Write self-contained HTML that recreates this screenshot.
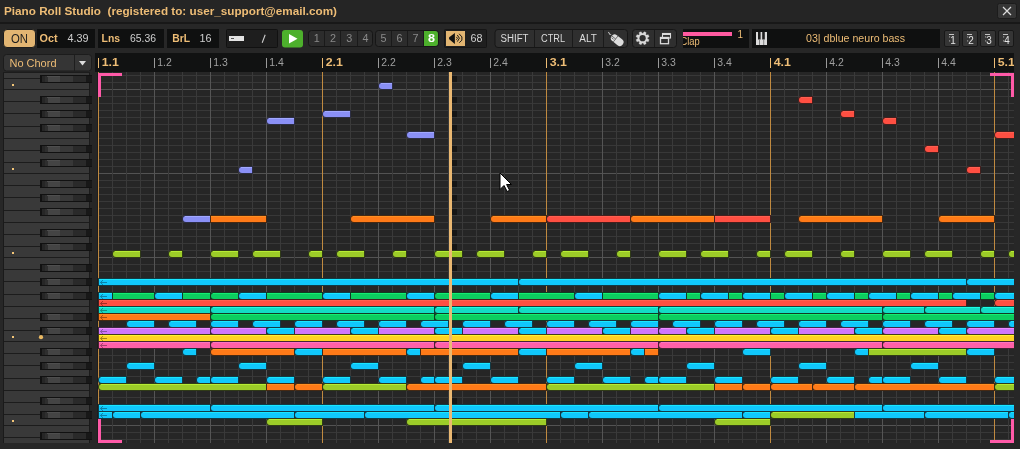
<!DOCTYPE html>
<html><head><meta charset="utf-8"><title>Piano Roll Studio</title>
<style>
html,body{margin:0;padding:0;background:#272727;overflow:hidden;}
svg{display:block;font-family:"Liberation Sans", sans-serif;will-change:transform;}
text{white-space:pre;}
</style></head>
<body>
<svg width="1020" height="449" viewBox="0 0 1020 449">
<rect x="0" y="0" width="1020" height="449" fill="#272727" />
<rect x="0" y="0" width="1020" height="22" fill="#252525" />
<rect x="0" y="22" width="1020" height="2" fill="#181818" />
<text x="4" y="14.6" font-size="10" fill="#eebd76" font-weight="bold" text-anchor="start" textLength="333" lengthAdjust="spacingAndGlyphs" >Piano Roll Studio  (registered to: user_support@email.com)</text>
<rect x="997.5" y="3.5" width="19" height="15" rx="2" fill="#363636" stroke="#1c1c1c" stroke-width="1"/>
<path d="M1003 7 L1011 15 M1011 7 L1003 15" stroke="#dcdcdc" stroke-width="1.2"/>
<rect x="3.5" y="29.5" width="32" height="18" rx="3.5" fill="#e2b572" stroke="#1c1c1c" stroke-width="1"/>
<text x="19.5" y="43" font-size="12" fill="#1e1e1e" font-weight="normal" text-anchor="middle" textLength="17" lengthAdjust="spacingAndGlyphs" >ON</text>
<rect x="37" y="29" width="58" height="19" fill="#0f1010" />
<text x="39.6" y="41.8" font-size="10" fill="#eebd76" font-weight="bold" text-anchor="start" textLength="18" lengthAdjust="spacingAndGlyphs" >Oct</text>
<text x="67.5" y="41.8" font-size="10" fill="#cfcfcf" font-weight="normal" text-anchor="start" textLength="21" lengthAdjust="spacingAndGlyphs" >4.39</text>
<rect x="98" y="29" width="66" height="19" fill="#0f1010" />
<text x="101.6" y="41.8" font-size="10" fill="#eebd76" font-weight="bold" text-anchor="start" textLength="18.5" lengthAdjust="spacingAndGlyphs" >Lns</text>
<text x="130" y="41.8" font-size="10" fill="#cfcfcf" font-weight="normal" text-anchor="start" textLength="26" lengthAdjust="spacingAndGlyphs" >65.36</text>
<rect x="167" y="29" width="52" height="19" fill="#0f1010" />
<text x="172.2" y="41.8" font-size="10" fill="#eebd76" font-weight="bold" text-anchor="start" textLength="17.8" lengthAdjust="spacingAndGlyphs" >BrL</text>
<text x="199.5" y="41.8" font-size="10" fill="#cfcfcf" font-weight="normal" text-anchor="start" textLength="12" lengthAdjust="spacingAndGlyphs" >16</text>
<rect x="226.5" y="29.5" width="51" height="18" rx="1" fill="#1e1e1e" stroke="#111" stroke-width="1"/>
<rect x="229" y="36" width="15" height="5" fill="#e4e4e4" />
<rect x="231" y="38" width="3" height="1" fill="#555" />
<path d="M265.2 34.8 L262.2 42.8" stroke="#d0d0d0" stroke-width="1.1"/>
<rect x="282" y="30" width="21" height="17.5" rx="3" fill="#4db02c"/>
<path d="M289 34 L297.5 38.75 L289 43.5 Z" fill="#ffffff"/>
<rect x="308.5" y="30.5" width="64" height="16" rx="3" fill="#2c2c2c" stroke="#161616" stroke-width="1"/>
<text x="316.625" y="42.3" font-size="10" fill="#8a8a8a" font-weight="normal" text-anchor="middle" textLength="6" lengthAdjust="spacingAndGlyphs" >1</text>
<rect x="324" y="31" width="1" height="15" fill="#1a1a1a" />
<text x="332.875" y="42.3" font-size="10" fill="#8a8a8a" font-weight="normal" text-anchor="middle" textLength="6" lengthAdjust="spacingAndGlyphs" >2</text>
<rect x="340" y="31" width="1" height="15" fill="#1a1a1a" />
<text x="349.125" y="42.3" font-size="10" fill="#8a8a8a" font-weight="normal" text-anchor="middle" textLength="6" lengthAdjust="spacingAndGlyphs" >3</text>
<rect x="357" y="31" width="1" height="15" fill="#1a1a1a" />
<text x="365.375" y="42.3" font-size="10" fill="#8a8a8a" font-weight="normal" text-anchor="middle" textLength="6" lengthAdjust="spacingAndGlyphs" >4</text>
<rect x="375.5" y="30.5" width="63" height="16" rx="3" fill="#2c2c2c" stroke="#161616" stroke-width="1"/>
<text x="383.5" y="42.3" font-size="10" fill="#8a8a8a" font-weight="normal" text-anchor="middle" textLength="6" lengthAdjust="spacingAndGlyphs" >5</text>
<rect x="391" y="31" width="1" height="15" fill="#1a1a1a" />
<text x="399.5" y="42.3" font-size="10" fill="#8a8a8a" font-weight="normal" text-anchor="middle" textLength="6" lengthAdjust="spacingAndGlyphs" >6</text>
<rect x="407" y="31" width="1" height="15" fill="#1a1a1a" />
<text x="415.5" y="42.3" font-size="10" fill="#8a8a8a" font-weight="normal" text-anchor="middle" textLength="6" lengthAdjust="spacingAndGlyphs" >7</text>
<rect x="423" y="31" width="1" height="15" fill="#1a1a1a" />
<path d="M424.0 31 H435 Q438 31 438 34 V43 Q438 46 435 46 H424.0 Z" fill="#4db02c"/>
<text x="431.5" y="42.3" font-size="10.5" fill="#ffffff" font-weight="bold" text-anchor="middle" textLength="7" lengthAdjust="spacingAndGlyphs" >8</text>
<rect x="444.5" y="29.5" width="42" height="18" rx="1" fill="#1f1f1f" stroke="#151515" stroke-width="1"/>
<rect x="446" y="31" width="19" height="15" fill="#e2b572" />
<path d="M449.2 37.2 Q448.8 38.2 449.2 39.2 L454.9 43.9 V32.9 Z" fill="#111"/>
<path d="M456.3 36.9 L457.5 38.3 L456.3 39.7 M457.3 35 L459.4 38.2 L457.3 41.6 M459.1 33.8 L461.9 36.9 V40.2 L459.3 42.7" stroke="#111" stroke-width="0.95" fill="none"/>
<text x="470.5" y="42" font-size="10" fill="#cfcfcf" font-weight="normal" text-anchor="start" textLength="12" lengthAdjust="spacingAndGlyphs" >68</text>
<rect x="495" y="29.5" width="132.5" height="18" rx="3" fill="#2f2f2f" stroke="#161616" stroke-width="1"/>
<rect x="534" y="30" width="1" height="17" fill="#1a1a1a" />
<rect x="572" y="30" width="1" height="17" fill="#1a1a1a" />
<rect x="603" y="30" width="1" height="17" fill="#1a1a1a" />
<text x="514.5" y="42.3" font-size="10" fill="#dcdcdc" font-weight="normal" text-anchor="middle" textLength="28" lengthAdjust="spacingAndGlyphs" >SHIFT</text>
<text x="553" y="42.3" font-size="10" fill="#dcdcdc" font-weight="normal" text-anchor="middle" textLength="24" lengthAdjust="spacingAndGlyphs" >CTRL</text>
<text x="588" y="42.3" font-size="10" fill="#dcdcdc" font-weight="normal" text-anchor="middle" textLength="17.5" lengthAdjust="spacingAndGlyphs" >ALT</text>
<g transform="translate(617.2,40.2) rotate(-52)"><rect x="-3.7" y="-7" width="7.4" height="14" rx="3.7" fill="#dcdcdc"/><path d="M-3.7 -2 H3.7 M0 -7 V-2 M-1.5 -6 V-3.4" stroke="#4a4a4a" stroke-width="0.7"/></g>
<path d="M608 32.2 L609.5 33 L609 34 L611.2 34.6" stroke="#cfcfcf" stroke-width="0.8" fill="none"/>
<rect x="632.5" y="29.5" width="44" height="18" rx="3" fill="#2f2f2f" stroke="#161616" stroke-width="1"/>
<rect x="654" y="30" width="1" height="17" fill="#1a1a1a" />
<path d="M647.48 38.65 L649.13 39.68 L648.27 41.77 L646.37 41.33 L645.73 41.97 L646.17 43.87 L644.08 44.73 L643.05 43.08 L642.15 43.08 L641.12 44.73 L639.03 43.87 L639.47 41.97 L638.83 41.33 L636.93 41.77 L636.07 39.68 L637.72 38.65 L637.72 37.75 L636.07 36.72 L636.93 34.63 L638.83 35.07 L639.47 34.43 L639.03 32.53 L641.12 31.67 L642.15 33.32 L643.05 33.32 L644.08 31.67 L646.17 32.53 L645.73 34.43 L646.37 35.07 L648.27 34.63 L649.13 36.72 L647.48 37.75 Z" fill="#d8d8d8" stroke="#d8d8d8" stroke-width="0.3" stroke-linejoin="round"/><circle cx="642.6" cy="38.2" r="3.1" fill="#2f2f2f"/>
<rect x="662.5" y="33.5" width="8" height="4.5" fill="none" stroke="#dadada" stroke-width="1.1"/>
<rect x="662" y="33" width="9" height="2" fill="#dadada" />
<rect x="660.5" y="37.5" width="8" height="6.2" fill="#2f2f2f" stroke="#dadada" stroke-width="1.3"/>
<rect x="660" y="37" width="9" height="2" fill="#dadada" />
<rect x="683" y="29" width="66" height="19" fill="#0f1010" />
<rect x="683" y="32" width="49" height="4" fill="#ff5aa0" />
<text x="737.5" y="37.8" font-size="10" fill="#eebd76" font-weight="normal" text-anchor="start" textLength="5.5" lengthAdjust="spacingAndGlyphs" >1</text>
<clipPath id="clapclip"><rect x="683" y="29" width="66" height="19"/></clipPath>
<text x="680.4" y="45.2" font-size="10" fill="#eebd76" font-weight="normal" text-anchor="start" textLength="19.2" lengthAdjust="spacingAndGlyphs" clip-path="url(#clapclip)">Clap</text>
<rect x="752" y="29" width="188" height="19" fill="#0f1010" />
<rect x="756" y="32" width="11" height="13" fill="#dcdcdc" />
<rect x="758" y="32" width="2.6" height="7.5" fill="#1e1e1e" />
<rect x="762.2" y="32" width="2.6" height="7.5" fill="#1e1e1e" />
<rect x="759" y="39.5" width="0.9" height="5.5" fill="#777" />
<rect x="763.3" y="39.5" width="0.9" height="5.5" fill="#777" />
<text x="855.5" y="42.3" font-size="10" fill="#eebd76" font-weight="normal" text-anchor="middle" textLength="99" lengthAdjust="spacingAndGlyphs" >03| dblue neuro bass</text>
<rect x="944.5" y="30.5" width="15.0" height="16" rx="1.5" fill="#353535" stroke="#181818" stroke-width="1"/>
<rect x="949.0" y="34" width="5" height="1" fill="#c4c4c4" />
<text x="953.0" y="44" font-size="10" fill="#e6e6e6" font-weight="normal" text-anchor="middle" textLength="5.5" lengthAdjust="spacingAndGlyphs" >1</text>
<rect x="949.0" y="36.3" width="1.2" height="1.2" fill="#9a9a9a" />
<rect x="949.0" y="40.3" width="1.2" height="1.2" fill="#9a9a9a" />
<rect x="962.5" y="30.5" width="15.0" height="16" rx="1.5" fill="#353535" stroke="#181818" stroke-width="1"/>
<rect x="967.0" y="34" width="5" height="1" fill="#c4c4c4" />
<text x="971.0" y="44" font-size="10" fill="#e6e6e6" font-weight="normal" text-anchor="middle" textLength="5.5" lengthAdjust="spacingAndGlyphs" >2</text>
<rect x="967.0" y="36.3" width="1.2" height="1.2" fill="#9a9a9a" />
<rect x="967.0" y="40.3" width="1.2" height="1.2" fill="#9a9a9a" />
<rect x="980.5" y="30.5" width="15.0" height="16" rx="1.5" fill="#353535" stroke="#181818" stroke-width="1"/>
<rect x="985.0" y="34" width="5" height="1" fill="#c4c4c4" />
<text x="989.0" y="44" font-size="10" fill="#e6e6e6" font-weight="normal" text-anchor="middle" textLength="5.5" lengthAdjust="spacingAndGlyphs" >3</text>
<rect x="985.0" y="36.3" width="1.2" height="1.2" fill="#9a9a9a" />
<rect x="985.0" y="40.3" width="1.2" height="1.2" fill="#9a9a9a" />
<rect x="998.5" y="30.5" width="15.0" height="16" rx="1.5" fill="#353535" stroke="#181818" stroke-width="1"/>
<rect x="1003.0" y="34" width="5" height="1" fill="#c4c4c4" />
<text x="1007.0" y="44" font-size="10" fill="#e6e6e6" font-weight="normal" text-anchor="middle" textLength="5.5" lengthAdjust="spacingAndGlyphs" >4</text>
<rect x="1003.0" y="36.3" width="1.2" height="1.2" fill="#9a9a9a" />
<rect x="1003.0" y="40.3" width="1.2" height="1.2" fill="#9a9a9a" />
<rect x="3.5" y="54.5" width="88" height="16.5" rx="3" fill="#353535" stroke="#1c1c1c" stroke-width="1"/>
<rect x="74" y="55" width="1" height="16" fill="#1e1e1e" />
<text x="9.5" y="66.8" font-size="10" fill="#eebd76" font-weight="normal" text-anchor="start" textLength="47" lengthAdjust="spacingAndGlyphs" >No Chord</text>
<path d="M79 61 H86 L82.5 65.5 Z" fill="#dedede"/>
<rect x="95" y="53" width="919" height="19" fill="#111212" />
<rect x="98" y="58" width="1" height="10" fill="#eebd76" />
<text x="101.7" y="66.3" font-size="10" fill="#eebd76" font-weight="bold" text-anchor="start" textLength="17.2" lengthAdjust="spacingAndGlyphs" clip-path="url(#rulerclip)">1.1</text>
<rect x="154" y="58" width="1" height="10" fill="#9a9a9a" />
<text x="157.3" y="66.3" font-size="10" fill="#a0a0a0" font-weight="normal" text-anchor="start" textLength="14.5" lengthAdjust="spacingAndGlyphs" >1.2</text>
<rect x="210" y="58" width="1" height="10" fill="#9a9a9a" />
<text x="213.3" y="66.3" font-size="10" fill="#a0a0a0" font-weight="normal" text-anchor="start" textLength="14.5" lengthAdjust="spacingAndGlyphs" >1.3</text>
<rect x="266" y="58" width="1" height="10" fill="#9a9a9a" />
<text x="269.3" y="66.3" font-size="10" fill="#a0a0a0" font-weight="normal" text-anchor="start" textLength="14.5" lengthAdjust="spacingAndGlyphs" >1.4</text>
<rect x="322" y="58" width="1" height="10" fill="#eebd76" />
<text x="325.7" y="66.3" font-size="10" fill="#eebd76" font-weight="bold" text-anchor="start" textLength="17.2" lengthAdjust="spacingAndGlyphs" clip-path="url(#rulerclip)">2.1</text>
<rect x="378" y="58" width="1" height="10" fill="#9a9a9a" />
<text x="381.3" y="66.3" font-size="10" fill="#a0a0a0" font-weight="normal" text-anchor="start" textLength="14.5" lengthAdjust="spacingAndGlyphs" >2.2</text>
<rect x="434" y="58" width="1" height="10" fill="#9a9a9a" />
<text x="437.3" y="66.3" font-size="10" fill="#a0a0a0" font-weight="normal" text-anchor="start" textLength="14.5" lengthAdjust="spacingAndGlyphs" >2.3</text>
<rect x="490" y="58" width="1" height="10" fill="#9a9a9a" />
<text x="493.3" y="66.3" font-size="10" fill="#a0a0a0" font-weight="normal" text-anchor="start" textLength="14.5" lengthAdjust="spacingAndGlyphs" >2.4</text>
<rect x="546" y="58" width="1" height="10" fill="#eebd76" />
<text x="549.7" y="66.3" font-size="10" fill="#eebd76" font-weight="bold" text-anchor="start" textLength="17.2" lengthAdjust="spacingAndGlyphs" clip-path="url(#rulerclip)">3.1</text>
<rect x="602" y="58" width="1" height="10" fill="#9a9a9a" />
<text x="605.3" y="66.3" font-size="10" fill="#a0a0a0" font-weight="normal" text-anchor="start" textLength="14.5" lengthAdjust="spacingAndGlyphs" >3.2</text>
<rect x="658" y="58" width="1" height="10" fill="#9a9a9a" />
<text x="661.3" y="66.3" font-size="10" fill="#a0a0a0" font-weight="normal" text-anchor="start" textLength="14.5" lengthAdjust="spacingAndGlyphs" >3.3</text>
<rect x="714" y="58" width="1" height="10" fill="#9a9a9a" />
<text x="717.3" y="66.3" font-size="10" fill="#a0a0a0" font-weight="normal" text-anchor="start" textLength="14.5" lengthAdjust="spacingAndGlyphs" >3.4</text>
<rect x="770" y="58" width="1" height="10" fill="#eebd76" />
<text x="773.7" y="66.3" font-size="10" fill="#eebd76" font-weight="bold" text-anchor="start" textLength="17.2" lengthAdjust="spacingAndGlyphs" clip-path="url(#rulerclip)">4.1</text>
<rect x="826" y="58" width="1" height="10" fill="#9a9a9a" />
<text x="829.3" y="66.3" font-size="10" fill="#a0a0a0" font-weight="normal" text-anchor="start" textLength="14.5" lengthAdjust="spacingAndGlyphs" >4.2</text>
<rect x="882" y="58" width="1" height="10" fill="#9a9a9a" />
<text x="885.3" y="66.3" font-size="10" fill="#a0a0a0" font-weight="normal" text-anchor="start" textLength="14.5" lengthAdjust="spacingAndGlyphs" >4.3</text>
<rect x="938" y="58" width="1" height="10" fill="#9a9a9a" />
<text x="941.3" y="66.3" font-size="10" fill="#a0a0a0" font-weight="normal" text-anchor="start" textLength="14.5" lengthAdjust="spacingAndGlyphs" >4.4</text>
<rect x="994" y="58" width="1" height="10" fill="#eebd76" />
<text x="997.7" y="66.3" font-size="10" fill="#eebd76" font-weight="bold" text-anchor="start" textLength="17.2" lengthAdjust="spacingAndGlyphs" clip-path="url(#rulerclip)">5.1</text>
<clipPath id="rulerclip"><rect x="95" y="53" width="919" height="19"/></clipPath>
<rect x="3" y="72" width="1" height="371" fill="#1a1a1a" />
<rect x="4" y="72" width="85" height="371" fill="#393939" />
<rect x="89" y="72" width="1" height="371" fill="#1a1a1a" />
<rect x="3" y="72" width="86" height="1" fill="#1c1c1c" />
<rect x="90" y="72" width="7" height="371" fill="#262626" />
<rect x="97" y="72" width="1" height="371" fill="#1e1e1e" />
<rect x="4" y="89" width="85" height="1" fill="#1c1c1c" />
<rect x="4" y="78" width="85" height="1" fill="#1c1c1c" />
<rect x="12" y="84" width="2" height="2" fill="#f4c678" />
<rect x="4" y="173" width="85" height="1" fill="#1c1c1c" />
<rect x="4" y="162" width="85" height="1" fill="#1c1c1c" />
<rect x="4" y="150" width="85" height="1" fill="#1c1c1c" />
<rect x="4" y="138" width="85" height="1" fill="#1c1c1c" />
<rect x="4" y="126" width="85" height="1" fill="#1c1c1c" />
<rect x="4" y="113" width="85" height="1" fill="#1c1c1c" />
<rect x="4" y="101" width="85" height="1" fill="#1c1c1c" />
<rect x="12" y="168" width="2" height="2" fill="#f4c678" />
<rect x="4" y="257" width="85" height="1" fill="#1c1c1c" />
<rect x="4" y="246" width="85" height="1" fill="#1c1c1c" />
<rect x="4" y="234" width="85" height="1" fill="#1c1c1c" />
<rect x="4" y="222" width="85" height="1" fill="#1c1c1c" />
<rect x="4" y="210" width="85" height="1" fill="#1c1c1c" />
<rect x="4" y="197" width="85" height="1" fill="#1c1c1c" />
<rect x="4" y="185" width="85" height="1" fill="#1c1c1c" />
<rect x="12" y="252" width="2" height="2" fill="#f4c678" />
<rect x="4" y="341" width="85" height="1" fill="#1c1c1c" />
<rect x="4" y="330" width="85" height="1" fill="#1c1c1c" />
<rect x="4" y="318" width="85" height="1" fill="#1c1c1c" />
<rect x="4" y="306" width="85" height="1" fill="#1c1c1c" />
<rect x="4" y="294" width="85" height="1" fill="#1c1c1c" />
<rect x="4" y="281" width="85" height="1" fill="#1c1c1c" />
<rect x="4" y="269" width="85" height="1" fill="#1c1c1c" />
<rect x="12" y="336" width="2" height="2" fill="#f4c678" />
<rect x="4" y="425" width="85" height="1" fill="#1c1c1c" />
<rect x="4" y="414" width="85" height="1" fill="#1c1c1c" />
<rect x="4" y="402" width="85" height="1" fill="#1c1c1c" />
<rect x="4" y="390" width="85" height="1" fill="#1c1c1c" />
<rect x="4" y="378" width="85" height="1" fill="#1c1c1c" />
<rect x="4" y="365" width="85" height="1" fill="#1c1c1c" />
<rect x="4" y="353" width="85" height="1" fill="#1c1c1c" />
<rect x="12" y="420" width="2" height="2" fill="#f4c678" />
<rect x="4" y="437" width="85" height="1" fill="#1c1c1c" />
<linearGradient id="bk" x1="0" x2="1" y1="0" y2="0"><stop offset="0" stop-color="#111"/><stop offset="0.03" stop-color="#111"/><stop offset="0.03" stop-color="#262626"/><stop offset="0.092" stop-color="#262626"/><stop offset="0.092" stop-color="#2e2e2e"/><stop offset="0.15" stop-color="#2e2e2e"/><stop offset="0.15" stop-color="#444"/><stop offset="0.387" stop-color="#444"/><stop offset="0.387" stop-color="#383838"/><stop offset="0.635" stop-color="#383838"/><stop offset="0.635" stop-color="#2a2a2a"/><stop offset="0.885" stop-color="#2a2a2a"/><stop offset="0.885" stop-color="#181818"/><stop offset="1" stop-color="#181818"/></linearGradient>
<clipPath id="pianoclip"><rect x="0" y="72" width="95" height="371"/></clipPath>
<g clip-path="url(#pianoclip)">
<rect x="40" y="75" width="52" height="8" fill="#111111" />
<rect x="40" y="76" width="52" height="6" fill="url(#bk)" />
<rect x="47" y="76" width="13" height="1" fill="#4e4e4e" />
<rect x="40" y="96" width="52" height="8" fill="#111111" />
<rect x="40" y="97" width="52" height="6" fill="url(#bk)" />
<rect x="47" y="97" width="13" height="1" fill="#4e4e4e" />
<rect x="40" y="110" width="52" height="8" fill="#111111" />
<rect x="40" y="111" width="52" height="6" fill="url(#bk)" />
<rect x="47" y="111" width="13" height="1" fill="#4e4e4e" />
<rect x="40" y="124" width="52" height="8" fill="#111111" />
<rect x="40" y="125" width="52" height="6" fill="url(#bk)" />
<rect x="47" y="125" width="13" height="1" fill="#4e4e4e" />
<rect x="40" y="145" width="52" height="8" fill="#111111" />
<rect x="40" y="146" width="52" height="6" fill="url(#bk)" />
<rect x="47" y="146" width="13" height="1" fill="#4e4e4e" />
<rect x="40" y="159" width="52" height="8" fill="#111111" />
<rect x="40" y="160" width="52" height="6" fill="url(#bk)" />
<rect x="47" y="160" width="13" height="1" fill="#4e4e4e" />
<rect x="40" y="180" width="52" height="8" fill="#111111" />
<rect x="40" y="181" width="52" height="6" fill="url(#bk)" />
<rect x="47" y="181" width="13" height="1" fill="#4e4e4e" />
<rect x="40" y="194" width="52" height="8" fill="#111111" />
<rect x="40" y="195" width="52" height="6" fill="url(#bk)" />
<rect x="47" y="195" width="13" height="1" fill="#4e4e4e" />
<rect x="40" y="208" width="52" height="8" fill="#111111" />
<rect x="40" y="209" width="52" height="6" fill="url(#bk)" />
<rect x="47" y="209" width="13" height="1" fill="#4e4e4e" />
<rect x="40" y="229" width="52" height="8" fill="#111111" />
<rect x="40" y="230" width="52" height="6" fill="url(#bk)" />
<rect x="47" y="230" width="13" height="1" fill="#4e4e4e" />
<rect x="40" y="243" width="52" height="8" fill="#111111" />
<rect x="40" y="244" width="52" height="6" fill="url(#bk)" />
<rect x="47" y="244" width="13" height="1" fill="#4e4e4e" />
<rect x="40" y="264" width="52" height="8" fill="#111111" />
<rect x="40" y="265" width="52" height="6" fill="url(#bk)" />
<rect x="47" y="265" width="13" height="1" fill="#4e4e4e" />
<rect x="40" y="278" width="52" height="8" fill="#111111" />
<rect x="40" y="279" width="52" height="6" fill="url(#bk)" />
<rect x="47" y="279" width="13" height="1" fill="#4e4e4e" />
<rect x="40" y="292" width="52" height="8" fill="#111111" />
<rect x="40" y="293" width="52" height="6" fill="url(#bk)" />
<rect x="47" y="293" width="13" height="1" fill="#4e4e4e" />
<rect x="40" y="313" width="52" height="8" fill="#111111" />
<rect x="40" y="314" width="52" height="6" fill="url(#bk)" />
<rect x="47" y="314" width="13" height="1" fill="#4e4e4e" />
<rect x="40" y="327" width="52" height="8" fill="#111111" />
<rect x="40" y="328" width="52" height="6" fill="url(#bk)" />
<rect x="47" y="328" width="13" height="1" fill="#4e4e4e" />
<rect x="40" y="348" width="52" height="8" fill="#111111" />
<rect x="40" y="349" width="52" height="6" fill="url(#bk)" />
<rect x="47" y="349" width="13" height="1" fill="#4e4e4e" />
<rect x="40" y="362" width="52" height="8" fill="#111111" />
<rect x="40" y="363" width="52" height="6" fill="url(#bk)" />
<rect x="47" y="363" width="13" height="1" fill="#4e4e4e" />
<rect x="40" y="376" width="52" height="8" fill="#111111" />
<rect x="40" y="377" width="52" height="6" fill="url(#bk)" />
<rect x="47" y="377" width="13" height="1" fill="#4e4e4e" />
<rect x="40" y="397" width="52" height="8" fill="#111111" />
<rect x="40" y="398" width="52" height="6" fill="url(#bk)" />
<rect x="47" y="398" width="13" height="1" fill="#4e4e4e" />
<rect x="40" y="411" width="52" height="8" fill="#111111" />
<rect x="40" y="412" width="52" height="6" fill="url(#bk)" />
<rect x="47" y="412" width="13" height="1" fill="#4e4e4e" />
<rect x="40" y="432" width="52" height="8" fill="#111111" />
<rect x="40" y="433" width="52" height="6" fill="url(#bk)" />
<rect x="47" y="433" width="13" height="1" fill="#4e4e4e" />
<rect x="40" y="446" width="52" height="8" fill="#111111" />
<rect x="40" y="447" width="52" height="6" fill="url(#bk)" />
<rect x="47" y="447" width="13" height="1" fill="#4e4e4e" />
</g>
<circle cx="41" cy="337.2" r="2.1" fill="#eab962"/>
<rect x="98" y="72" width="916" height="371" fill="#262626" />
<rect x="98" y="75" width="916" height="1" fill="#383838" />
<rect x="98" y="82" width="916" height="1" fill="#383838" />
<rect x="98" y="89" width="916" height="1" fill="#535353" />
<rect x="98" y="96" width="916" height="1" fill="#383838" />
<rect x="98" y="103" width="916" height="1" fill="#383838" />
<rect x="98" y="110" width="916" height="1" fill="#383838" />
<rect x="98" y="117" width="916" height="1" fill="#383838" />
<rect x="98" y="124" width="916" height="1" fill="#383838" />
<rect x="98" y="131" width="916" height="1" fill="#383838" />
<rect x="98" y="138" width="916" height="1" fill="#383838" />
<rect x="98" y="145" width="916" height="1" fill="#383838" />
<rect x="98" y="152" width="916" height="1" fill="#383838" />
<rect x="98" y="159" width="916" height="1" fill="#383838" />
<rect x="98" y="166" width="916" height="1" fill="#383838" />
<rect x="98" y="173" width="916" height="1" fill="#535353" />
<rect x="98" y="180" width="916" height="1" fill="#383838" />
<rect x="98" y="187" width="916" height="1" fill="#383838" />
<rect x="98" y="194" width="916" height="1" fill="#383838" />
<rect x="98" y="201" width="916" height="1" fill="#383838" />
<rect x="98" y="208" width="916" height="1" fill="#383838" />
<rect x="98" y="215" width="916" height="1" fill="#383838" />
<rect x="98" y="222" width="916" height="1" fill="#383838" />
<rect x="98" y="229" width="916" height="1" fill="#383838" />
<rect x="98" y="236" width="916" height="1" fill="#383838" />
<rect x="98" y="243" width="916" height="1" fill="#383838" />
<rect x="98" y="250" width="916" height="1" fill="#383838" />
<rect x="98" y="257" width="916" height="1" fill="#535353" />
<rect x="98" y="264" width="916" height="1" fill="#383838" />
<rect x="98" y="271" width="916" height="1" fill="#383838" />
<rect x="98" y="278" width="916" height="1" fill="#383838" />
<rect x="98" y="285" width="916" height="1" fill="#383838" />
<rect x="98" y="292" width="916" height="1" fill="#383838" />
<rect x="98" y="299" width="916" height="1" fill="#383838" />
<rect x="98" y="306" width="916" height="1" fill="#383838" />
<rect x="98" y="313" width="916" height="1" fill="#383838" />
<rect x="98" y="320" width="916" height="1" fill="#383838" />
<rect x="98" y="327" width="916" height="1" fill="#383838" />
<rect x="98" y="334" width="916" height="1" fill="#383838" />
<rect x="98" y="341" width="916" height="1" fill="#535353" />
<rect x="98" y="348" width="916" height="1" fill="#383838" />
<rect x="98" y="355" width="916" height="1" fill="#383838" />
<rect x="98" y="362" width="916" height="1" fill="#383838" />
<rect x="98" y="369" width="916" height="1" fill="#383838" />
<rect x="98" y="376" width="916" height="1" fill="#383838" />
<rect x="98" y="383" width="916" height="1" fill="#383838" />
<rect x="98" y="390" width="916" height="1" fill="#383838" />
<rect x="98" y="397" width="916" height="1" fill="#383838" />
<rect x="98" y="404" width="916" height="1" fill="#383838" />
<rect x="98" y="411" width="916" height="1" fill="#383838" />
<rect x="98" y="418" width="916" height="1" fill="#383838" />
<rect x="98" y="425" width="916" height="1" fill="#535353" />
<rect x="98" y="432" width="916" height="1" fill="#383838" />
<rect x="98" y="439" width="916" height="1" fill="#383838" />
<rect x="98" y="72" width="1" height="371" fill="#c08a40" />
<rect x="112" y="72" width="1" height="371" fill="#3a3a3a" />
<rect x="126" y="72" width="1" height="371" fill="#3a3a3a" />
<rect x="140" y="72" width="1" height="371" fill="#3a3a3a" />
<rect x="154" y="72" width="1" height="371" fill="#555555" />
<rect x="168" y="72" width="1" height="371" fill="#3a3a3a" />
<rect x="182" y="72" width="1" height="371" fill="#3a3a3a" />
<rect x="196" y="72" width="1" height="371" fill="#3a3a3a" />
<rect x="210" y="72" width="1" height="371" fill="#555555" />
<rect x="224" y="72" width="1" height="371" fill="#3a3a3a" />
<rect x="238" y="72" width="1" height="371" fill="#3a3a3a" />
<rect x="252" y="72" width="1" height="371" fill="#3a3a3a" />
<rect x="266" y="72" width="1" height="371" fill="#555555" />
<rect x="280" y="72" width="1" height="371" fill="#3a3a3a" />
<rect x="294" y="72" width="1" height="371" fill="#3a3a3a" />
<rect x="308" y="72" width="1" height="371" fill="#3a3a3a" />
<rect x="322" y="72" width="1" height="371" fill="#c08a40" />
<rect x="336" y="72" width="1" height="371" fill="#3a3a3a" />
<rect x="350" y="72" width="1" height="371" fill="#3a3a3a" />
<rect x="364" y="72" width="1" height="371" fill="#3a3a3a" />
<rect x="378" y="72" width="1" height="371" fill="#555555" />
<rect x="392" y="72" width="1" height="371" fill="#3a3a3a" />
<rect x="406" y="72" width="1" height="371" fill="#3a3a3a" />
<rect x="420" y="72" width="1" height="371" fill="#3a3a3a" />
<rect x="434" y="72" width="1" height="371" fill="#555555" />
<rect x="448" y="72" width="1" height="371" fill="#3a3a3a" />
<rect x="462" y="72" width="1" height="371" fill="#3a3a3a" />
<rect x="476" y="72" width="1" height="371" fill="#3a3a3a" />
<rect x="490" y="72" width="1" height="371" fill="#555555" />
<rect x="504" y="72" width="1" height="371" fill="#3a3a3a" />
<rect x="518" y="72" width="1" height="371" fill="#3a3a3a" />
<rect x="532" y="72" width="1" height="371" fill="#3a3a3a" />
<rect x="546" y="72" width="1" height="371" fill="#c08a40" />
<rect x="560" y="72" width="1" height="371" fill="#3a3a3a" />
<rect x="574" y="72" width="1" height="371" fill="#3a3a3a" />
<rect x="588" y="72" width="1" height="371" fill="#3a3a3a" />
<rect x="602" y="72" width="1" height="371" fill="#555555" />
<rect x="616" y="72" width="1" height="371" fill="#3a3a3a" />
<rect x="630" y="72" width="1" height="371" fill="#3a3a3a" />
<rect x="644" y="72" width="1" height="371" fill="#3a3a3a" />
<rect x="658" y="72" width="1" height="371" fill="#555555" />
<rect x="672" y="72" width="1" height="371" fill="#3a3a3a" />
<rect x="686" y="72" width="1" height="371" fill="#3a3a3a" />
<rect x="700" y="72" width="1" height="371" fill="#3a3a3a" />
<rect x="714" y="72" width="1" height="371" fill="#555555" />
<rect x="728" y="72" width="1" height="371" fill="#3a3a3a" />
<rect x="742" y="72" width="1" height="371" fill="#3a3a3a" />
<rect x="756" y="72" width="1" height="371" fill="#3a3a3a" />
<rect x="770" y="72" width="1" height="371" fill="#c08a40" />
<rect x="784" y="72" width="1" height="371" fill="#3a3a3a" />
<rect x="798" y="72" width="1" height="371" fill="#3a3a3a" />
<rect x="812" y="72" width="1" height="371" fill="#3a3a3a" />
<rect x="826" y="72" width="1" height="371" fill="#555555" />
<rect x="840" y="72" width="1" height="371" fill="#3a3a3a" />
<rect x="854" y="72" width="1" height="371" fill="#3a3a3a" />
<rect x="868" y="72" width="1" height="371" fill="#3a3a3a" />
<rect x="882" y="72" width="1" height="371" fill="#555555" />
<rect x="896" y="72" width="1" height="371" fill="#3a3a3a" />
<rect x="910" y="72" width="1" height="371" fill="#3a3a3a" />
<rect x="924" y="72" width="1" height="371" fill="#3a3a3a" />
<rect x="938" y="72" width="1" height="371" fill="#555555" />
<rect x="952" y="72" width="1" height="371" fill="#3a3a3a" />
<rect x="966" y="72" width="1" height="371" fill="#3a3a3a" />
<rect x="980" y="72" width="1" height="371" fill="#3a3a3a" />
<rect x="994" y="72" width="1" height="371" fill="#c08a40" />
<rect x="1008" y="72" width="1" height="371" fill="#3a3a3a" />
<rect x="452" y="76" width="5" height="6" fill="#151515" />
<rect x="452" y="97" width="5" height="6" fill="#151515" />
<rect x="452" y="111" width="5" height="6" fill="#151515" />
<rect x="452" y="125" width="5" height="6" fill="#151515" />
<rect x="452" y="146" width="5" height="6" fill="#151515" />
<rect x="452" y="160" width="5" height="6" fill="#151515" />
<rect x="452" y="181" width="5" height="6" fill="#151515" />
<rect x="452" y="195" width="5" height="6" fill="#151515" />
<rect x="452" y="209" width="5" height="6" fill="#151515" />
<rect x="452" y="230" width="5" height="6" fill="#151515" />
<rect x="452" y="244" width="5" height="6" fill="#151515" />
<rect x="452" y="265" width="5" height="6" fill="#151515" />
<rect x="452" y="279" width="5" height="6" fill="#151515" />
<rect x="452" y="293" width="5" height="6" fill="#151515" />
<rect x="452" y="314" width="5" height="6" fill="#151515" />
<rect x="452" y="328" width="5" height="6" fill="#151515" />
<rect x="452" y="349" width="5" height="6" fill="#151515" />
<rect x="452" y="363" width="5" height="6" fill="#151515" />
<rect x="452" y="377" width="5" height="6" fill="#151515" />
<rect x="452" y="398" width="5" height="6" fill="#151515" />
<rect x="452" y="412" width="5" height="6" fill="#151515" />
<rect x="452" y="433" width="5" height="6" fill="#151515" />
<clipPath id="gridclip"><rect x="98" y="72" width="916" height="371"/></clipPath>
<g clip-path="url(#gridclip)">
<path d="M382 82 H393 V90 H382 A4 4 0 0 1 378 86 V86 A4 4 0 0 1 382 82 Z" fill="#2c2e44"/>
<path d="M382 83 H392 V89 H382 A3 3 0 0 1 379 86 V86 A3 3 0 0 1 382 83 Z" fill="#8a90f6"/>
<rect x="381" y="83" width="11" height="1" fill="#a1a8ff" />
<path d="M802 96 H813 V104 H802 A4 4 0 0 1 798 100 V100 A4 4 0 0 1 802 96 Z" fill="#461f1d"/>
<path d="M802 97 H812 V103 H802 A3 3 0 0 1 799 100 V100 A3 3 0 0 1 802 97 Z" fill="#ff4f42"/>
<rect x="801" y="97" width="11" height="1" fill="#ff5f50" />
<path d="M326 110 H351 V118 H326 A4 4 0 0 1 322 114 V114 A4 4 0 0 1 326 110 Z" fill="#2c2e44"/>
<path d="M326 111 H350 V117 H326 A3 3 0 0 1 323 114 V114 A3 3 0 0 1 326 111 Z" fill="#8a90f6"/>
<rect x="325" y="111" width="25" height="1" fill="#a1a8ff" />
<path d="M844 110 H855 V118 H844 A4 4 0 0 1 840 114 V114 A4 4 0 0 1 844 110 Z" fill="#461f1d"/>
<path d="M844 111 H854 V117 H844 A3 3 0 0 1 841 114 V114 A3 3 0 0 1 844 111 Z" fill="#ff4f42"/>
<rect x="843" y="111" width="11" height="1" fill="#ff5f50" />
<path d="M270 117 H295 V125 H270 A4 4 0 0 1 266 121 V121 A4 4 0 0 1 270 117 Z" fill="#2c2e44"/>
<path d="M270 118 H294 V124 H270 A3 3 0 0 1 267 121 V121 A3 3 0 0 1 270 118 Z" fill="#8a90f6"/>
<rect x="269" y="118" width="25" height="1" fill="#a1a8ff" />
<path d="M886 117 H897 V125 H886 A4 4 0 0 1 882 121 V121 A4 4 0 0 1 886 117 Z" fill="#461f1d"/>
<path d="M886 118 H896 V124 H886 A3 3 0 0 1 883 121 V121 A3 3 0 0 1 886 118 Z" fill="#ff4f42"/>
<rect x="885" y="118" width="11" height="1" fill="#ff5f50" />
<path d="M410 131 H435 V139 H410 A4 4 0 0 1 406 135 V135 A4 4 0 0 1 410 131 Z" fill="#2c2e44"/>
<path d="M410 132 H434 V138 H410 A3 3 0 0 1 407 135 V135 A3 3 0 0 1 410 132 Z" fill="#8a90f6"/>
<rect x="409" y="132" width="25" height="1" fill="#a1a8ff" />
<path d="M998 131 H1015 V139 H998 A4 4 0 0 1 994 135 V135 A4 4 0 0 1 998 131 Z" fill="#461f1d"/>
<path d="M998 132 H1014 V138 H998 A3 3 0 0 1 995 135 V135 A3 3 0 0 1 998 132 Z" fill="#ff4f42"/>
<rect x="997" y="132" width="17" height="1" fill="#ff5f50" />
<path d="M928 145 H939 V153 H928 A4 4 0 0 1 924 149 V149 A4 4 0 0 1 928 145 Z" fill="#461f1d"/>
<path d="M928 146 H938 V152 H928 A3 3 0 0 1 925 149 V149 A3 3 0 0 1 928 146 Z" fill="#ff4f42"/>
<rect x="927" y="146" width="11" height="1" fill="#ff5f50" />
<path d="M242 166 H253 V174 H242 A4 4 0 0 1 238 170 V170 A4 4 0 0 1 242 166 Z" fill="#2c2e44"/>
<path d="M242 167 H252 V173 H242 A3 3 0 0 1 239 170 V170 A3 3 0 0 1 242 167 Z" fill="#8a90f6"/>
<rect x="241" y="167" width="11" height="1" fill="#a1a8ff" />
<path d="M970 166 H981 V174 H970 A4 4 0 0 1 966 170 V170 A4 4 0 0 1 970 166 Z" fill="#461f1d"/>
<path d="M970 167 H980 V173 H970 A3 3 0 0 1 967 170 V170 A3 3 0 0 1 970 167 Z" fill="#ff4f42"/>
<rect x="969" y="167" width="11" height="1" fill="#ff5f50" />
<path d="M186 215 H211 V223 H186 A4 4 0 0 1 182 219 V219 A4 4 0 0 1 186 215 Z" fill="#2c2e44"/>
<path d="M186 216 H210 V222 H186 A3 3 0 0 1 183 219 V219 A3 3 0 0 1 186 216 Z" fill="#8a90f6"/>
<rect x="185" y="216" width="25" height="1" fill="#a1a8ff" />
<rect x="210" y="215" width="57" height="8" fill="#462913" />
<rect x="211" y="216" width="55" height="6" fill="#ff7a18" />
<rect x="211" y="216" width="55" height="1" fill="#ff8f21" />
<path d="M354 215 H435 V223 H354 A4 4 0 0 1 350 219 V219 A4 4 0 0 1 354 215 Z" fill="#462913"/>
<path d="M354 216 H434 V222 H354 A3 3 0 0 1 351 219 V219 A3 3 0 0 1 354 216 Z" fill="#ff7a18"/>
<rect x="353" y="216" width="81" height="1" fill="#ff8f21" />
<path d="M494 215 H547 V223 H494 A4 4 0 0 1 490 219 V219 A4 4 0 0 1 494 215 Z" fill="#462913"/>
<path d="M494 216 H546 V222 H494 A3 3 0 0 1 491 219 V219 A3 3 0 0 1 494 216 Z" fill="#ff7a18"/>
<rect x="493" y="216" width="53" height="1" fill="#ff8f21" />
<path d="M550 215 H631 V223 H550 A4 4 0 0 1 546 219 V219 A4 4 0 0 1 550 215 Z" fill="#461f1d"/>
<path d="M550 216 H630 V222 H550 A3 3 0 0 1 547 219 V219 A3 3 0 0 1 550 216 Z" fill="#ff4f42"/>
<rect x="549" y="216" width="81" height="1" fill="#ff5f50" />
<path d="M634 215 H715 V223 H634 A4 4 0 0 1 630 219 V219 A4 4 0 0 1 634 215 Z" fill="#462913"/>
<path d="M634 216 H714 V222 H634 A3 3 0 0 1 631 219 V219 A3 3 0 0 1 634 216 Z" fill="#ff7a18"/>
<rect x="633" y="216" width="81" height="1" fill="#ff8f21" />
<rect x="714" y="215" width="57" height="8" fill="#461f1d" />
<rect x="715" y="216" width="55" height="6" fill="#ff4f42" />
<rect x="715" y="216" width="55" height="1" fill="#ff5f50" />
<path d="M802 215 H883 V223 H802 A4 4 0 0 1 798 219 V219 A4 4 0 0 1 802 215 Z" fill="#462913"/>
<path d="M802 216 H882 V222 H802 A3 3 0 0 1 799 219 V219 A3 3 0 0 1 802 216 Z" fill="#ff7a18"/>
<rect x="801" y="216" width="81" height="1" fill="#ff8f21" />
<path d="M942 215 H995 V223 H942 A4 4 0 0 1 938 219 V219 A4 4 0 0 1 942 215 Z" fill="#462913"/>
<path d="M942 216 H994 V222 H942 A3 3 0 0 1 939 219 V219 A3 3 0 0 1 942 216 Z" fill="#ff7a18"/>
<rect x="941" y="216" width="53" height="1" fill="#ff8f21" />
<path d="M116 250 H141 V258 H116 A4 4 0 0 1 112 254 V254 A4 4 0 0 1 116 250 Z" fill="#303b17"/>
<path d="M116 251 H140 V257 H116 A3 3 0 0 1 113 254 V254 A3 3 0 0 1 116 251 Z" fill="#9ccc28"/>
<rect x="115" y="251" width="25" height="1" fill="#b6ec33" />
<path d="M172 250 H183 V258 H172 A4 4 0 0 1 168 254 V254 A4 4 0 0 1 172 250 Z" fill="#303b17"/>
<path d="M172 251 H182 V257 H172 A3 3 0 0 1 169 254 V254 A3 3 0 0 1 172 251 Z" fill="#9ccc28"/>
<rect x="171" y="251" width="11" height="1" fill="#b6ec33" />
<path d="M214 250 H239 V258 H214 A4 4 0 0 1 210 254 V254 A4 4 0 0 1 214 250 Z" fill="#303b17"/>
<path d="M214 251 H238 V257 H214 A3 3 0 0 1 211 254 V254 A3 3 0 0 1 214 251 Z" fill="#9ccc28"/>
<rect x="213" y="251" width="25" height="1" fill="#b6ec33" />
<path d="M256 250 H281 V258 H256 A4 4 0 0 1 252 254 V254 A4 4 0 0 1 256 250 Z" fill="#303b17"/>
<path d="M256 251 H280 V257 H256 A3 3 0 0 1 253 254 V254 A3 3 0 0 1 256 251 Z" fill="#9ccc28"/>
<rect x="255" y="251" width="25" height="1" fill="#b6ec33" />
<path d="M312 250 H323 V258 H312 A4 4 0 0 1 308 254 V254 A4 4 0 0 1 312 250 Z" fill="#303b17"/>
<path d="M312 251 H322 V257 H312 A3 3 0 0 1 309 254 V254 A3 3 0 0 1 312 251 Z" fill="#9ccc28"/>
<rect x="311" y="251" width="11" height="1" fill="#b6ec33" />
<path d="M340 250 H365 V258 H340 A4 4 0 0 1 336 254 V254 A4 4 0 0 1 340 250 Z" fill="#303b17"/>
<path d="M340 251 H364 V257 H340 A3 3 0 0 1 337 254 V254 A3 3 0 0 1 340 251 Z" fill="#9ccc28"/>
<rect x="339" y="251" width="25" height="1" fill="#b6ec33" />
<path d="M396 250 H407 V258 H396 A4 4 0 0 1 392 254 V254 A4 4 0 0 1 396 250 Z" fill="#303b17"/>
<path d="M396 251 H406 V257 H396 A3 3 0 0 1 393 254 V254 A3 3 0 0 1 396 251 Z" fill="#9ccc28"/>
<rect x="395" y="251" width="11" height="1" fill="#b6ec33" />
<path d="M438 250 H463 V258 H438 A4 4 0 0 1 434 254 V254 A4 4 0 0 1 438 250 Z" fill="#303b17"/>
<path d="M438 251 H462 V257 H438 A3 3 0 0 1 435 254 V254 A3 3 0 0 1 438 251 Z" fill="#9ccc28"/>
<rect x="437" y="251" width="25" height="1" fill="#b6ec33" />
<path d="M480 250 H505 V258 H480 A4 4 0 0 1 476 254 V254 A4 4 0 0 1 480 250 Z" fill="#303b17"/>
<path d="M480 251 H504 V257 H480 A3 3 0 0 1 477 254 V254 A3 3 0 0 1 480 251 Z" fill="#9ccc28"/>
<rect x="479" y="251" width="25" height="1" fill="#b6ec33" />
<path d="M536 250 H547 V258 H536 A4 4 0 0 1 532 254 V254 A4 4 0 0 1 536 250 Z" fill="#303b17"/>
<path d="M536 251 H546 V257 H536 A3 3 0 0 1 533 254 V254 A3 3 0 0 1 536 251 Z" fill="#9ccc28"/>
<rect x="535" y="251" width="11" height="1" fill="#b6ec33" />
<path d="M564 250 H589 V258 H564 A4 4 0 0 1 560 254 V254 A4 4 0 0 1 564 250 Z" fill="#303b17"/>
<path d="M564 251 H588 V257 H564 A3 3 0 0 1 561 254 V254 A3 3 0 0 1 564 251 Z" fill="#9ccc28"/>
<rect x="563" y="251" width="25" height="1" fill="#b6ec33" />
<path d="M620 250 H631 V258 H620 A4 4 0 0 1 616 254 V254 A4 4 0 0 1 620 250 Z" fill="#303b17"/>
<path d="M620 251 H630 V257 H620 A3 3 0 0 1 617 254 V254 A3 3 0 0 1 620 251 Z" fill="#9ccc28"/>
<rect x="619" y="251" width="11" height="1" fill="#b6ec33" />
<path d="M662 250 H687 V258 H662 A4 4 0 0 1 658 254 V254 A4 4 0 0 1 662 250 Z" fill="#303b17"/>
<path d="M662 251 H686 V257 H662 A3 3 0 0 1 659 254 V254 A3 3 0 0 1 662 251 Z" fill="#9ccc28"/>
<rect x="661" y="251" width="25" height="1" fill="#b6ec33" />
<path d="M704 250 H729 V258 H704 A4 4 0 0 1 700 254 V254 A4 4 0 0 1 704 250 Z" fill="#303b17"/>
<path d="M704 251 H728 V257 H704 A3 3 0 0 1 701 254 V254 A3 3 0 0 1 704 251 Z" fill="#9ccc28"/>
<rect x="703" y="251" width="25" height="1" fill="#b6ec33" />
<path d="M760 250 H771 V258 H760 A4 4 0 0 1 756 254 V254 A4 4 0 0 1 760 250 Z" fill="#303b17"/>
<path d="M760 251 H770 V257 H760 A3 3 0 0 1 757 254 V254 A3 3 0 0 1 760 251 Z" fill="#9ccc28"/>
<rect x="759" y="251" width="11" height="1" fill="#b6ec33" />
<path d="M788 250 H813 V258 H788 A4 4 0 0 1 784 254 V254 A4 4 0 0 1 788 250 Z" fill="#303b17"/>
<path d="M788 251 H812 V257 H788 A3 3 0 0 1 785 254 V254 A3 3 0 0 1 788 251 Z" fill="#9ccc28"/>
<rect x="787" y="251" width="25" height="1" fill="#b6ec33" />
<path d="M844 250 H855 V258 H844 A4 4 0 0 1 840 254 V254 A4 4 0 0 1 844 250 Z" fill="#303b17"/>
<path d="M844 251 H854 V257 H844 A3 3 0 0 1 841 254 V254 A3 3 0 0 1 844 251 Z" fill="#9ccc28"/>
<rect x="843" y="251" width="11" height="1" fill="#b6ec33" />
<path d="M886 250 H911 V258 H886 A4 4 0 0 1 882 254 V254 A4 4 0 0 1 886 250 Z" fill="#303b17"/>
<path d="M886 251 H910 V257 H886 A3 3 0 0 1 883 254 V254 A3 3 0 0 1 886 251 Z" fill="#9ccc28"/>
<rect x="885" y="251" width="25" height="1" fill="#b6ec33" />
<path d="M928 250 H953 V258 H928 A4 4 0 0 1 924 254 V254 A4 4 0 0 1 928 250 Z" fill="#303b17"/>
<path d="M928 251 H952 V257 H928 A3 3 0 0 1 925 254 V254 A3 3 0 0 1 928 251 Z" fill="#9ccc28"/>
<rect x="927" y="251" width="25" height="1" fill="#b6ec33" />
<path d="M984 250 H995 V258 H984 A4 4 0 0 1 980 254 V254 A4 4 0 0 1 984 250 Z" fill="#303b17"/>
<path d="M984 251 H994 V257 H984 A3 3 0 0 1 981 254 V254 A3 3 0 0 1 984 251 Z" fill="#9ccc28"/>
<rect x="983" y="251" width="11" height="1" fill="#b6ec33" />
<path d="M1012 250 H1015 V258 H1012 A4 4 0 0 1 1008 254 V254 A4 4 0 0 1 1012 250 Z" fill="#303b17"/>
<path d="M1012 251 H1014 V257 H1012 A3 3 0 0 1 1009 254 V254 A3 3 0 0 1 1012 251 Z" fill="#9ccc28"/>
<rect x="1011" y="251" width="3" height="1" fill="#b6ec33" />
<rect x="98" y="278" width="421" height="8" fill="#123a45" />
<rect x="99" y="279" width="419" height="6" fill="#10c8fc" />
<rect x="99" y="279" width="419" height="1" fill="#18e7ff" />
<path d="M100.5 282.5 H107 M103 280.1 L100.5 282.5 L103 284.9" stroke="#0a7aa0" stroke-width="0.9" fill="none"/>
<path d="M522 278 H967 V286 H522 A4 4 0 0 1 518 282 V282 A4 4 0 0 1 522 278 Z" fill="#123a45"/>
<path d="M522 279 H966 V285 H522 A3 3 0 0 1 519 282 V282 A3 3 0 0 1 522 279 Z" fill="#10c8fc"/>
<rect x="521" y="279" width="445" height="1" fill="#18e7ff" />
<path d="M970 278 H1015 V286 H970 A4 4 0 0 1 966 282 V282 A4 4 0 0 1 970 278 Z" fill="#123a45"/>
<path d="M970 279 H1014 V285 H970 A3 3 0 0 1 967 282 V282 A3 3 0 0 1 970 279 Z" fill="#10c8fc"/>
<rect x="969" y="279" width="45" height="1" fill="#18e7ff" />
<rect x="98" y="292" width="15" height="8" fill="#123a45" />
<rect x="99" y="293" width="13" height="6" fill="#10c8fc" />
<rect x="99" y="293" width="13" height="1" fill="#18e7ff" />
<path d="M100.5 296.5 H107 M103 294.1 L100.5 296.5 L103 298.9" stroke="#0a7aa0" stroke-width="0.9" fill="none"/>
<rect x="112" y="292" width="43" height="8" fill="#113b23" />
<rect x="113" y="293" width="41" height="6" fill="#0cce60" />
<rect x="113" y="293" width="41" height="1" fill="#13ee72" />
<path d="M158 292 H183 V300 H158 A4 4 0 0 1 154 296 V296 A4 4 0 0 1 158 292 Z" fill="#123a45"/>
<path d="M158 293 H182 V299 H158 A3 3 0 0 1 155 296 V296 A3 3 0 0 1 158 293 Z" fill="#10c8fc"/>
<rect x="157" y="293" width="25" height="1" fill="#18e7ff" />
<rect x="182" y="292" width="29" height="8" fill="#113b23" />
<rect x="183" y="293" width="27" height="6" fill="#0cce60" />
<rect x="183" y="293" width="27" height="1" fill="#13ee72" />
<path d="M214 292 H239 V300 H214 A4 4 0 0 1 210 296 V296 A4 4 0 0 1 214 292 Z" fill="#113b23"/>
<path d="M214 293 H238 V299 H214 A3 3 0 0 1 211 296 V296 A3 3 0 0 1 214 293 Z" fill="#0cce60"/>
<rect x="213" y="293" width="25" height="1" fill="#13ee72" />
<path d="M242 292 H267 V300 H242 A4 4 0 0 1 238 296 V296 A4 4 0 0 1 242 292 Z" fill="#123a45"/>
<path d="M242 293 H266 V299 H242 A3 3 0 0 1 239 296 V296 A3 3 0 0 1 242 293 Z" fill="#10c8fc"/>
<rect x="241" y="293" width="25" height="1" fill="#18e7ff" />
<rect x="266" y="292" width="57" height="8" fill="#113b23" />
<rect x="267" y="293" width="55" height="6" fill="#0cce60" />
<rect x="267" y="293" width="55" height="1" fill="#13ee72" />
<path d="M326 292 H351 V300 H326 A4 4 0 0 1 322 296 V296 A4 4 0 0 1 326 292 Z" fill="#123a45"/>
<path d="M326 293 H350 V299 H326 A3 3 0 0 1 323 296 V296 A3 3 0 0 1 326 293 Z" fill="#10c8fc"/>
<rect x="325" y="293" width="25" height="1" fill="#18e7ff" />
<rect x="350" y="292" width="57" height="8" fill="#113b23" />
<rect x="351" y="293" width="55" height="6" fill="#0cce60" />
<rect x="351" y="293" width="55" height="1" fill="#13ee72" />
<path d="M410 292 H435 V300 H410 A4 4 0 0 1 406 296 V296 A4 4 0 0 1 410 292 Z" fill="#123a45"/>
<path d="M410 293 H434 V299 H410 A3 3 0 0 1 407 296 V296 A3 3 0 0 1 410 293 Z" fill="#10c8fc"/>
<rect x="409" y="293" width="25" height="1" fill="#18e7ff" />
<path d="M438 292 H491 V300 H438 A4 4 0 0 1 434 296 V296 A4 4 0 0 1 438 292 Z" fill="#113b23"/>
<path d="M438 293 H490 V299 H438 A3 3 0 0 1 435 296 V296 A3 3 0 0 1 438 293 Z" fill="#0cce60"/>
<rect x="437" y="293" width="53" height="1" fill="#13ee72" />
<path d="M494 292 H519 V300 H494 A4 4 0 0 1 490 296 V296 A4 4 0 0 1 494 292 Z" fill="#123a45"/>
<path d="M494 293 H518 V299 H494 A3 3 0 0 1 491 296 V296 A3 3 0 0 1 494 293 Z" fill="#10c8fc"/>
<rect x="493" y="293" width="25" height="1" fill="#18e7ff" />
<rect x="518" y="292" width="57" height="8" fill="#113b23" />
<rect x="519" y="293" width="55" height="6" fill="#0cce60" />
<rect x="519" y="293" width="55" height="1" fill="#13ee72" />
<path d="M578 292 H603 V300 H578 A4 4 0 0 1 574 296 V296 A4 4 0 0 1 578 292 Z" fill="#123a45"/>
<path d="M578 293 H602 V299 H578 A3 3 0 0 1 575 296 V296 A3 3 0 0 1 578 293 Z" fill="#10c8fc"/>
<rect x="577" y="293" width="25" height="1" fill="#18e7ff" />
<rect x="602" y="292" width="57" height="8" fill="#113b23" />
<rect x="603" y="293" width="55" height="6" fill="#0cce60" />
<rect x="603" y="293" width="55" height="1" fill="#13ee72" />
<path d="M662 292 H687 V300 H662 A4 4 0 0 1 658 296 V296 A4 4 0 0 1 662 292 Z" fill="#123a45"/>
<path d="M662 293 H686 V299 H662 A3 3 0 0 1 659 296 V296 A3 3 0 0 1 662 293 Z" fill="#10c8fc"/>
<rect x="661" y="293" width="25" height="1" fill="#18e7ff" />
<rect x="686" y="292" width="15" height="8" fill="#113b23" />
<rect x="687" y="293" width="13" height="6" fill="#0cce60" />
<rect x="687" y="293" width="13" height="1" fill="#13ee72" />
<path d="M704 292 H729 V300 H704 A4 4 0 0 1 700 296 V296 A4 4 0 0 1 704 292 Z" fill="#123a45"/>
<path d="M704 293 H728 V299 H704 A3 3 0 0 1 701 296 V296 A3 3 0 0 1 704 293 Z" fill="#10c8fc"/>
<rect x="703" y="293" width="25" height="1" fill="#18e7ff" />
<rect x="728" y="292" width="15" height="8" fill="#113b23" />
<rect x="729" y="293" width="13" height="6" fill="#0cce60" />
<rect x="729" y="293" width="13" height="1" fill="#13ee72" />
<path d="M746 292 H771 V300 H746 A4 4 0 0 1 742 296 V296 A4 4 0 0 1 746 292 Z" fill="#123a45"/>
<path d="M746 293 H770 V299 H746 A3 3 0 0 1 743 296 V296 A3 3 0 0 1 746 293 Z" fill="#10c8fc"/>
<rect x="745" y="293" width="25" height="1" fill="#18e7ff" />
<rect x="770" y="292" width="15" height="8" fill="#113b23" />
<rect x="771" y="293" width="13" height="6" fill="#0cce60" />
<rect x="771" y="293" width="13" height="1" fill="#13ee72" />
<path d="M788 292 H813 V300 H788 A4 4 0 0 1 784 296 V296 A4 4 0 0 1 788 292 Z" fill="#123a45"/>
<path d="M788 293 H812 V299 H788 A3 3 0 0 1 785 296 V296 A3 3 0 0 1 788 293 Z" fill="#10c8fc"/>
<rect x="787" y="293" width="25" height="1" fill="#18e7ff" />
<rect x="812" y="292" width="15" height="8" fill="#113b23" />
<rect x="813" y="293" width="13" height="6" fill="#0cce60" />
<rect x="813" y="293" width="13" height="1" fill="#13ee72" />
<path d="M830 292 H855 V300 H830 A4 4 0 0 1 826 296 V296 A4 4 0 0 1 830 292 Z" fill="#123a45"/>
<path d="M830 293 H854 V299 H830 A3 3 0 0 1 827 296 V296 A3 3 0 0 1 830 293 Z" fill="#10c8fc"/>
<rect x="829" y="293" width="25" height="1" fill="#18e7ff" />
<rect x="854" y="292" width="15" height="8" fill="#113b23" />
<rect x="855" y="293" width="13" height="6" fill="#0cce60" />
<rect x="855" y="293" width="13" height="1" fill="#13ee72" />
<path d="M872 292 H897 V300 H872 A4 4 0 0 1 868 296 V296 A4 4 0 0 1 872 292 Z" fill="#123a45"/>
<path d="M872 293 H896 V299 H872 A3 3 0 0 1 869 296 V296 A3 3 0 0 1 872 293 Z" fill="#10c8fc"/>
<rect x="871" y="293" width="25" height="1" fill="#18e7ff" />
<rect x="896" y="292" width="15" height="8" fill="#113b23" />
<rect x="897" y="293" width="13" height="6" fill="#0cce60" />
<rect x="897" y="293" width="13" height="1" fill="#13ee72" />
<path d="M914 292 H939 V300 H914 A4 4 0 0 1 910 296 V296 A4 4 0 0 1 914 292 Z" fill="#123a45"/>
<path d="M914 293 H938 V299 H914 A3 3 0 0 1 911 296 V296 A3 3 0 0 1 914 293 Z" fill="#10c8fc"/>
<rect x="913" y="293" width="25" height="1" fill="#18e7ff" />
<rect x="938" y="292" width="15" height="8" fill="#113b23" />
<rect x="939" y="293" width="13" height="6" fill="#0cce60" />
<rect x="939" y="293" width="13" height="1" fill="#13ee72" />
<path d="M956 292 H981 V300 H956 A4 4 0 0 1 952 296 V296 A4 4 0 0 1 956 292 Z" fill="#123a45"/>
<path d="M956 293 H980 V299 H956 A3 3 0 0 1 953 296 V296 A3 3 0 0 1 956 293 Z" fill="#10c8fc"/>
<rect x="955" y="293" width="25" height="1" fill="#18e7ff" />
<rect x="980" y="292" width="15" height="8" fill="#113b23" />
<rect x="981" y="293" width="13" height="6" fill="#0cce60" />
<rect x="981" y="293" width="13" height="1" fill="#13ee72" />
<path d="M998 292 H1015 V300 H998 A4 4 0 0 1 994 296 V296 A4 4 0 0 1 998 292 Z" fill="#123a45"/>
<path d="M998 293 H1014 V299 H998 A3 3 0 0 1 995 296 V296 A3 3 0 0 1 998 293 Z" fill="#10c8fc"/>
<rect x="997" y="293" width="17" height="1" fill="#18e7ff" />
<rect x="98" y="299" width="869" height="8" fill="#461f1d" />
<rect x="99" y="300" width="867" height="6" fill="#ff4f42" />
<rect x="99" y="300" width="867" height="1" fill="#ff5f50" />
<path d="M100.5 303.5 H107 M103 301.1 L100.5 303.5 L103 305.9" stroke="#9a2a22" stroke-width="0.9" fill="none"/>
<path d="M998 299 H1015 V307 H998 A4 4 0 0 1 994 303 V303 A4 4 0 0 1 998 299 Z" fill="#461f1d"/>
<path d="M998 300 H1014 V306 H998 A3 3 0 0 1 995 303 V303 A3 3 0 0 1 998 300 Z" fill="#ff4f42"/>
<rect x="997" y="300" width="17" height="1" fill="#ff5f50" />
<rect x="98" y="306" width="113" height="8" fill="#123e3a" />
<rect x="99" y="307" width="111" height="6" fill="#12dcc6" />
<rect x="99" y="307" width="111" height="1" fill="#1afee5" />
<path d="M100.5 310.5 H107 M103 308.1 L100.5 310.5 L103 312.9" stroke="#0a8a7a" stroke-width="0.9" fill="none"/>
<path d="M214 306 H435 V314 H214 A4 4 0 0 1 210 310 V310 A4 4 0 0 1 214 306 Z" fill="#123e3a"/>
<path d="M214 307 H434 V313 H214 A3 3 0 0 1 211 310 V310 A3 3 0 0 1 214 307 Z" fill="#12dcc6"/>
<rect x="213" y="307" width="221" height="1" fill="#1afee5" />
<path d="M438 306 H519 V314 H438 A4 4 0 0 1 434 310 V310 A4 4 0 0 1 438 306 Z" fill="#123e3a"/>
<path d="M438 307 H518 V313 H438 A3 3 0 0 1 435 310 V310 A3 3 0 0 1 438 307 Z" fill="#12dcc6"/>
<rect x="437" y="307" width="81" height="1" fill="#1afee5" />
<path d="M522 306 H659 V314 H522 A4 4 0 0 1 518 310 V310 A4 4 0 0 1 522 306 Z" fill="#123e3a"/>
<path d="M522 307 H658 V313 H522 A3 3 0 0 1 519 310 V310 A3 3 0 0 1 522 307 Z" fill="#12dcc6"/>
<rect x="521" y="307" width="137" height="1" fill="#1afee5" />
<path d="M662 306 H883 V314 H662 A4 4 0 0 1 658 310 V310 A4 4 0 0 1 662 306 Z" fill="#123e3a"/>
<path d="M662 307 H882 V313 H662 A3 3 0 0 1 659 310 V310 A3 3 0 0 1 662 307 Z" fill="#12dcc6"/>
<rect x="661" y="307" width="221" height="1" fill="#1afee5" />
<path d="M886 306 H925 V314 H886 A4 4 0 0 1 882 310 V310 A4 4 0 0 1 886 306 Z" fill="#123e3a"/>
<path d="M886 307 H924 V313 H886 A3 3 0 0 1 883 310 V310 A3 3 0 0 1 886 307 Z" fill="#12dcc6"/>
<rect x="885" y="307" width="39" height="1" fill="#1afee5" />
<path d="M928 306 H981 V314 H928 A4 4 0 0 1 924 310 V310 A4 4 0 0 1 928 306 Z" fill="#123e3a"/>
<path d="M928 307 H980 V313 H928 A3 3 0 0 1 925 310 V310 A3 3 0 0 1 928 307 Z" fill="#12dcc6"/>
<rect x="927" y="307" width="53" height="1" fill="#1afee5" />
<path d="M984 306 H1015 V314 H984 A4 4 0 0 1 980 310 V310 A4 4 0 0 1 984 306 Z" fill="#123e3a"/>
<path d="M984 307 H1014 V313 H984 A3 3 0 0 1 981 310 V310 A3 3 0 0 1 984 307 Z" fill="#12dcc6"/>
<rect x="983" y="307" width="31" height="1" fill="#1afee5" />
<rect x="98" y="313" width="113" height="8" fill="#462913" />
<rect x="99" y="314" width="111" height="6" fill="#ff7a18" />
<rect x="99" y="314" width="111" height="1" fill="#ff8f21" />
<path d="M100.5 317.5 H107 M103 315.1 L100.5 317.5 L103 319.9" stroke="#9a4a10" stroke-width="0.9" fill="none"/>
<path d="M214 313 H435 V321 H214 A4 4 0 0 1 210 317 V317 A4 4 0 0 1 214 313 Z" fill="#113b23"/>
<path d="M214 314 H434 V320 H214 A3 3 0 0 1 211 317 V317 A3 3 0 0 1 214 314 Z" fill="#0cce60"/>
<rect x="213" y="314" width="221" height="1" fill="#13ee72" />
<path d="M438 313 H659 V321 H438 A4 4 0 0 1 434 317 V317 A4 4 0 0 1 438 313 Z" fill="#113b23"/>
<path d="M438 314 H658 V320 H438 A3 3 0 0 1 435 317 V317 A3 3 0 0 1 438 314 Z" fill="#0cce60"/>
<rect x="437" y="314" width="221" height="1" fill="#13ee72" />
<path d="M662 313 H883 V321 H662 A4 4 0 0 1 658 317 V317 A4 4 0 0 1 662 313 Z" fill="#113b23"/>
<path d="M662 314 H882 V320 H662 A3 3 0 0 1 659 317 V317 A3 3 0 0 1 662 314 Z" fill="#0cce60"/>
<rect x="661" y="314" width="221" height="1" fill="#13ee72" />
<path d="M886 313 H1015 V321 H886 A4 4 0 0 1 882 317 V317 A4 4 0 0 1 886 313 Z" fill="#113b23"/>
<path d="M886 314 H1014 V320 H886 A3 3 0 0 1 883 317 V317 A3 3 0 0 1 886 314 Z" fill="#0cce60"/>
<rect x="885" y="314" width="129" height="1" fill="#13ee72" />
<path d="M130 320 H155 V328 H130 A4 4 0 0 1 126 324 V324 A4 4 0 0 1 130 320 Z" fill="#123a45"/>
<path d="M130 321 H154 V327 H130 A3 3 0 0 1 127 324 V324 A3 3 0 0 1 130 321 Z" fill="#10c8fc"/>
<rect x="129" y="321" width="25" height="1" fill="#18e7ff" />
<path d="M172 320 H197 V328 H172 A4 4 0 0 1 168 324 V324 A4 4 0 0 1 172 320 Z" fill="#123a45"/>
<path d="M172 321 H196 V327 H172 A3 3 0 0 1 169 324 V324 A3 3 0 0 1 172 321 Z" fill="#10c8fc"/>
<rect x="171" y="321" width="25" height="1" fill="#18e7ff" />
<path d="M214 320 H239 V328 H214 A4 4 0 0 1 210 324 V324 A4 4 0 0 1 214 320 Z" fill="#123a45"/>
<path d="M214 321 H238 V327 H214 A3 3 0 0 1 211 324 V324 A3 3 0 0 1 214 321 Z" fill="#10c8fc"/>
<rect x="213" y="321" width="25" height="1" fill="#18e7ff" />
<path d="M256 320 H281 V328 H256 A4 4 0 0 1 252 324 V324 A4 4 0 0 1 256 320 Z" fill="#123a45"/>
<path d="M256 321 H280 V327 H256 A3 3 0 0 1 253 324 V324 A3 3 0 0 1 256 321 Z" fill="#10c8fc"/>
<rect x="255" y="321" width="25" height="1" fill="#18e7ff" />
<path d="M298 320 H323 V328 H298 A4 4 0 0 1 294 324 V324 A4 4 0 0 1 298 320 Z" fill="#123a45"/>
<path d="M298 321 H322 V327 H298 A3 3 0 0 1 295 324 V324 A3 3 0 0 1 298 321 Z" fill="#10c8fc"/>
<rect x="297" y="321" width="25" height="1" fill="#18e7ff" />
<path d="M340 320 H365 V328 H340 A4 4 0 0 1 336 324 V324 A4 4 0 0 1 340 320 Z" fill="#123a45"/>
<path d="M340 321 H364 V327 H340 A3 3 0 0 1 337 324 V324 A3 3 0 0 1 340 321 Z" fill="#10c8fc"/>
<rect x="339" y="321" width="25" height="1" fill="#18e7ff" />
<path d="M382 320 H407 V328 H382 A4 4 0 0 1 378 324 V324 A4 4 0 0 1 382 320 Z" fill="#123a45"/>
<path d="M382 321 H406 V327 H382 A3 3 0 0 1 379 324 V324 A3 3 0 0 1 382 321 Z" fill="#10c8fc"/>
<rect x="381" y="321" width="25" height="1" fill="#18e7ff" />
<path d="M424 320 H449 V328 H424 A4 4 0 0 1 420 324 V324 A4 4 0 0 1 424 320 Z" fill="#123a45"/>
<path d="M424 321 H448 V327 H424 A3 3 0 0 1 421 324 V324 A3 3 0 0 1 424 321 Z" fill="#10c8fc"/>
<rect x="423" y="321" width="25" height="1" fill="#18e7ff" />
<path d="M466 320 H491 V328 H466 A4 4 0 0 1 462 324 V324 A4 4 0 0 1 466 320 Z" fill="#123a45"/>
<path d="M466 321 H490 V327 H466 A3 3 0 0 1 463 324 V324 A3 3 0 0 1 466 321 Z" fill="#10c8fc"/>
<rect x="465" y="321" width="25" height="1" fill="#18e7ff" />
<path d="M508 320 H533 V328 H508 A4 4 0 0 1 504 324 V324 A4 4 0 0 1 508 320 Z" fill="#123a45"/>
<path d="M508 321 H532 V327 H508 A3 3 0 0 1 505 324 V324 A3 3 0 0 1 508 321 Z" fill="#10c8fc"/>
<rect x="507" y="321" width="25" height="1" fill="#18e7ff" />
<path d="M550 320 H575 V328 H550 A4 4 0 0 1 546 324 V324 A4 4 0 0 1 550 320 Z" fill="#123a45"/>
<path d="M550 321 H574 V327 H550 A3 3 0 0 1 547 324 V324 A3 3 0 0 1 550 321 Z" fill="#10c8fc"/>
<rect x="549" y="321" width="25" height="1" fill="#18e7ff" />
<path d="M592 320 H617 V328 H592 A4 4 0 0 1 588 324 V324 A4 4 0 0 1 592 320 Z" fill="#123a45"/>
<path d="M592 321 H616 V327 H592 A3 3 0 0 1 589 324 V324 A3 3 0 0 1 592 321 Z" fill="#10c8fc"/>
<rect x="591" y="321" width="25" height="1" fill="#18e7ff" />
<path d="M634 320 H659 V328 H634 A4 4 0 0 1 630 324 V324 A4 4 0 0 1 634 320 Z" fill="#123a45"/>
<path d="M634 321 H658 V327 H634 A3 3 0 0 1 631 324 V324 A3 3 0 0 1 634 321 Z" fill="#10c8fc"/>
<rect x="633" y="321" width="25" height="1" fill="#18e7ff" />
<path d="M676 320 H701 V328 H676 A4 4 0 0 1 672 324 V324 A4 4 0 0 1 676 320 Z" fill="#123a45"/>
<path d="M676 321 H700 V327 H676 A3 3 0 0 1 673 324 V324 A3 3 0 0 1 676 321 Z" fill="#10c8fc"/>
<rect x="675" y="321" width="25" height="1" fill="#18e7ff" />
<path d="M718 320 H743 V328 H718 A4 4 0 0 1 714 324 V324 A4 4 0 0 1 718 320 Z" fill="#123a45"/>
<path d="M718 321 H742 V327 H718 A3 3 0 0 1 715 324 V324 A3 3 0 0 1 718 321 Z" fill="#10c8fc"/>
<rect x="717" y="321" width="25" height="1" fill="#18e7ff" />
<path d="M760 320 H785 V328 H760 A4 4 0 0 1 756 324 V324 A4 4 0 0 1 760 320 Z" fill="#123a45"/>
<path d="M760 321 H784 V327 H760 A3 3 0 0 1 757 324 V324 A3 3 0 0 1 760 321 Z" fill="#10c8fc"/>
<rect x="759" y="321" width="25" height="1" fill="#18e7ff" />
<path d="M802 320 H827 V328 H802 A4 4 0 0 1 798 324 V324 A4 4 0 0 1 802 320 Z" fill="#123a45"/>
<path d="M802 321 H826 V327 H802 A3 3 0 0 1 799 324 V324 A3 3 0 0 1 802 321 Z" fill="#10c8fc"/>
<rect x="801" y="321" width="25" height="1" fill="#18e7ff" />
<path d="M844 320 H869 V328 H844 A4 4 0 0 1 840 324 V324 A4 4 0 0 1 844 320 Z" fill="#123a45"/>
<path d="M844 321 H868 V327 H844 A3 3 0 0 1 841 324 V324 A3 3 0 0 1 844 321 Z" fill="#10c8fc"/>
<rect x="843" y="321" width="25" height="1" fill="#18e7ff" />
<path d="M886 320 H911 V328 H886 A4 4 0 0 1 882 324 V324 A4 4 0 0 1 886 320 Z" fill="#123a45"/>
<path d="M886 321 H910 V327 H886 A3 3 0 0 1 883 324 V324 A3 3 0 0 1 886 321 Z" fill="#10c8fc"/>
<rect x="885" y="321" width="25" height="1" fill="#18e7ff" />
<path d="M928 320 H953 V328 H928 A4 4 0 0 1 924 324 V324 A4 4 0 0 1 928 320 Z" fill="#123a45"/>
<path d="M928 321 H952 V327 H928 A3 3 0 0 1 925 324 V324 A3 3 0 0 1 928 321 Z" fill="#10c8fc"/>
<rect x="927" y="321" width="25" height="1" fill="#18e7ff" />
<path d="M970 320 H995 V328 H970 A4 4 0 0 1 966 324 V324 A4 4 0 0 1 970 320 Z" fill="#123a45"/>
<path d="M970 321 H994 V327 H970 A3 3 0 0 1 967 324 V324 A3 3 0 0 1 970 321 Z" fill="#10c8fc"/>
<rect x="969" y="321" width="25" height="1" fill="#18e7ff" />
<path d="M1012 320 H1015 V328 H1012 A4 4 0 0 1 1008 324 V324 A4 4 0 0 1 1012 320 Z" fill="#123a45"/>
<path d="M1012 321 H1014 V327 H1012 A3 3 0 0 1 1009 324 V324 A3 3 0 0 1 1012 321 Z" fill="#10c8fc"/>
<rect x="1011" y="321" width="3" height="1" fill="#18e7ff" />
<rect x="98" y="327" width="113" height="8" fill="#3c2845" />
<rect x="99" y="328" width="111" height="6" fill="#cf76fa" />
<rect x="99" y="328" width="111" height="1" fill="#ef8bff" />
<path d="M100.5 331.5 H107 M103 329.1 L100.5 331.5 L103 333.9" stroke="#805098" stroke-width="0.9" fill="none"/>
<path d="M214 327 H267 V335 H214 A4 4 0 0 1 210 331 V331 A4 4 0 0 1 214 327 Z" fill="#3c2845"/>
<path d="M214 328 H266 V334 H214 A3 3 0 0 1 211 331 V331 A3 3 0 0 1 214 328 Z" fill="#cf76fa"/>
<rect x="213" y="328" width="53" height="1" fill="#ef8bff" />
<path d="M270 327 H295 V335 H270 A4 4 0 0 1 266 331 V331 A4 4 0 0 1 270 327 Z" fill="#123a45"/>
<path d="M270 328 H294 V334 H270 A3 3 0 0 1 267 331 V331 A3 3 0 0 1 270 328 Z" fill="#10c8fc"/>
<rect x="269" y="328" width="25" height="1" fill="#18e7ff" />
<rect x="294" y="327" width="57" height="8" fill="#3c2845" />
<rect x="295" y="328" width="55" height="6" fill="#cf76fa" />
<rect x="295" y="328" width="55" height="1" fill="#ef8bff" />
<path d="M354 327 H379 V335 H354 A4 4 0 0 1 350 331 V331 A4 4 0 0 1 354 327 Z" fill="#123a45"/>
<path d="M354 328 H378 V334 H354 A3 3 0 0 1 351 331 V331 A3 3 0 0 1 354 328 Z" fill="#10c8fc"/>
<rect x="353" y="328" width="25" height="1" fill="#18e7ff" />
<rect x="378" y="327" width="57" height="8" fill="#3c2845" />
<rect x="379" y="328" width="55" height="6" fill="#cf76fa" />
<rect x="379" y="328" width="55" height="1" fill="#ef8bff" />
<path d="M438 327 H463 V335 H438 A4 4 0 0 1 434 331 V331 A4 4 0 0 1 438 327 Z" fill="#123a45"/>
<path d="M438 328 H462 V334 H438 A3 3 0 0 1 435 331 V331 A3 3 0 0 1 438 328 Z" fill="#10c8fc"/>
<rect x="437" y="328" width="25" height="1" fill="#18e7ff" />
<rect x="462" y="327" width="57" height="8" fill="#3c2845" />
<rect x="463" y="328" width="55" height="6" fill="#cf76fa" />
<rect x="463" y="328" width="55" height="1" fill="#ef8bff" />
<path d="M522 327 H547 V335 H522 A4 4 0 0 1 518 331 V331 A4 4 0 0 1 522 327 Z" fill="#123a45"/>
<path d="M522 328 H546 V334 H522 A3 3 0 0 1 519 331 V331 A3 3 0 0 1 522 328 Z" fill="#10c8fc"/>
<rect x="521" y="328" width="25" height="1" fill="#18e7ff" />
<rect x="546" y="327" width="57" height="8" fill="#3c2845" />
<rect x="547" y="328" width="55" height="6" fill="#cf76fa" />
<rect x="547" y="328" width="55" height="1" fill="#ef8bff" />
<path d="M606 327 H631 V335 H606 A4 4 0 0 1 602 331 V331 A4 4 0 0 1 606 327 Z" fill="#123a45"/>
<path d="M606 328 H630 V334 H606 A3 3 0 0 1 603 331 V331 A3 3 0 0 1 606 328 Z" fill="#10c8fc"/>
<rect x="605" y="328" width="25" height="1" fill="#18e7ff" />
<rect x="630" y="327" width="29" height="8" fill="#3c2845" />
<rect x="631" y="328" width="27" height="6" fill="#cf76fa" />
<rect x="631" y="328" width="27" height="1" fill="#ef8bff" />
<path d="M662 327 H687 V335 H662 A4 4 0 0 1 658 331 V331 A4 4 0 0 1 662 327 Z" fill="#3c2845"/>
<path d="M662 328 H686 V334 H662 A3 3 0 0 1 659 331 V331 A3 3 0 0 1 662 328 Z" fill="#cf76fa"/>
<rect x="661" y="328" width="25" height="1" fill="#ef8bff" />
<path d="M690 327 H715 V335 H690 A4 4 0 0 1 686 331 V331 A4 4 0 0 1 690 327 Z" fill="#123a45"/>
<path d="M690 328 H714 V334 H690 A3 3 0 0 1 687 331 V331 A3 3 0 0 1 690 328 Z" fill="#10c8fc"/>
<rect x="689" y="328" width="25" height="1" fill="#18e7ff" />
<rect x="714" y="327" width="57" height="8" fill="#3c2845" />
<rect x="715" y="328" width="55" height="6" fill="#cf76fa" />
<rect x="715" y="328" width="55" height="1" fill="#ef8bff" />
<path d="M774 327 H799 V335 H774 A4 4 0 0 1 770 331 V331 A4 4 0 0 1 774 327 Z" fill="#123a45"/>
<path d="M774 328 H798 V334 H774 A3 3 0 0 1 771 331 V331 A3 3 0 0 1 774 328 Z" fill="#10c8fc"/>
<rect x="773" y="328" width="25" height="1" fill="#18e7ff" />
<rect x="798" y="327" width="57" height="8" fill="#3c2845" />
<rect x="799" y="328" width="55" height="6" fill="#cf76fa" />
<rect x="799" y="328" width="55" height="1" fill="#ef8bff" />
<path d="M858 327 H883 V335 H858 A4 4 0 0 1 854 331 V331 A4 4 0 0 1 858 327 Z" fill="#123a45"/>
<path d="M858 328 H882 V334 H858 A3 3 0 0 1 855 331 V331 A3 3 0 0 1 858 328 Z" fill="#10c8fc"/>
<rect x="857" y="328" width="25" height="1" fill="#18e7ff" />
<path d="M886 327 H939 V335 H886 A4 4 0 0 1 882 331 V331 A4 4 0 0 1 886 327 Z" fill="#3c2845"/>
<path d="M886 328 H938 V334 H886 A3 3 0 0 1 883 331 V331 A3 3 0 0 1 886 328 Z" fill="#cf76fa"/>
<rect x="885" y="328" width="53" height="1" fill="#ef8bff" />
<path d="M942 327 H967 V335 H942 A4 4 0 0 1 938 331 V331 A4 4 0 0 1 942 327 Z" fill="#123a45"/>
<path d="M942 328 H966 V334 H942 A3 3 0 0 1 939 331 V331 A3 3 0 0 1 942 328 Z" fill="#10c8fc"/>
<rect x="941" y="328" width="25" height="1" fill="#18e7ff" />
<path d="M970 327 H1015 V335 H970 A4 4 0 0 1 966 331 V331 A4 4 0 0 1 970 327 Z" fill="#3c2845"/>
<path d="M970 328 H1014 V334 H970 A3 3 0 0 1 967 331 V331 A3 3 0 0 1 970 328 Z" fill="#cf76fa"/>
<rect x="969" y="328" width="45" height="1" fill="#ef8bff" />
<rect x="98" y="334" width="917" height="8" fill="#463c16" />
<rect x="99" y="335" width="915" height="6" fill="#ffd224" />
<rect x="99" y="335" width="915" height="1" fill="#fff32e" />
<path d="M100.5 338.5 H107 M103 336.1 L100.5 338.5 L103 340.9" stroke="#9a7a10" stroke-width="0.9" fill="none"/>
<rect x="98" y="341" width="113" height="8" fill="#462333" />
<rect x="99" y="342" width="111" height="6" fill="#ff60a8" />
<rect x="99" y="342" width="111" height="1" fill="#ff72c3" />
<path d="M100.5 345.5 H107 M103 343.1 L100.5 345.5 L103 347.9" stroke="#9a3a66" stroke-width="0.9" fill="none"/>
<path d="M214 341 H435 V349 H214 A4 4 0 0 1 210 345 V345 A4 4 0 0 1 214 341 Z" fill="#462333"/>
<path d="M214 342 H434 V348 H214 A3 3 0 0 1 211 345 V345 A3 3 0 0 1 214 342 Z" fill="#ff60a8"/>
<rect x="213" y="342" width="221" height="1" fill="#ff72c3" />
<path d="M438 341 H659 V349 H438 A4 4 0 0 1 434 345 V345 A4 4 0 0 1 438 341 Z" fill="#462333"/>
<path d="M438 342 H658 V348 H438 A3 3 0 0 1 435 345 V345 A3 3 0 0 1 438 342 Z" fill="#ff60a8"/>
<rect x="437" y="342" width="221" height="1" fill="#ff72c3" />
<path d="M662 341 H883 V349 H662 A4 4 0 0 1 658 345 V345 A4 4 0 0 1 662 341 Z" fill="#462333"/>
<path d="M662 342 H882 V348 H662 A3 3 0 0 1 659 345 V345 A3 3 0 0 1 662 342 Z" fill="#ff60a8"/>
<rect x="661" y="342" width="221" height="1" fill="#ff72c3" />
<path d="M886 341 H1015 V349 H886 A4 4 0 0 1 882 345 V345 A4 4 0 0 1 886 341 Z" fill="#462333"/>
<path d="M886 342 H1014 V348 H886 A3 3 0 0 1 883 345 V345 A3 3 0 0 1 886 342 Z" fill="#ff60a8"/>
<rect x="885" y="342" width="129" height="1" fill="#ff72c3" />
<path d="M186 348 H197 V356 H186 A4 4 0 0 1 182 352 V352 A4 4 0 0 1 186 348 Z" fill="#123a45"/>
<path d="M186 349 H196 V355 H186 A3 3 0 0 1 183 352 V352 A3 3 0 0 1 186 349 Z" fill="#10c8fc"/>
<rect x="185" y="349" width="11" height="1" fill="#18e7ff" />
<path d="M214 348 H295 V356 H214 A4 4 0 0 1 210 352 V352 A4 4 0 0 1 214 348 Z" fill="#462913"/>
<path d="M214 349 H294 V355 H214 A3 3 0 0 1 211 352 V352 A3 3 0 0 1 214 349 Z" fill="#ff7a18"/>
<rect x="213" y="349" width="81" height="1" fill="#ff8f21" />
<path d="M298 348 H323 V356 H298 A4 4 0 0 1 294 352 V352 A4 4 0 0 1 298 348 Z" fill="#123a45"/>
<path d="M298 349 H322 V355 H298 A3 3 0 0 1 295 352 V352 A3 3 0 0 1 298 349 Z" fill="#10c8fc"/>
<rect x="297" y="349" width="25" height="1" fill="#18e7ff" />
<rect x="322" y="348" width="85" height="8" fill="#462913" />
<rect x="323" y="349" width="83" height="6" fill="#ff7a18" />
<rect x="323" y="349" width="83" height="1" fill="#ff8f21" />
<path d="M410 348 H421 V356 H410 A4 4 0 0 1 406 352 V352 A4 4 0 0 1 410 348 Z" fill="#123a45"/>
<path d="M410 349 H420 V355 H410 A3 3 0 0 1 407 352 V352 A3 3 0 0 1 410 349 Z" fill="#10c8fc"/>
<rect x="409" y="349" width="11" height="1" fill="#18e7ff" />
<rect x="420" y="348" width="99" height="8" fill="#462913" />
<rect x="421" y="349" width="97" height="6" fill="#ff7a18" />
<rect x="421" y="349" width="97" height="1" fill="#ff8f21" />
<path d="M522 348 H547 V356 H522 A4 4 0 0 1 518 352 V352 A4 4 0 0 1 522 348 Z" fill="#123a45"/>
<path d="M522 349 H546 V355 H522 A3 3 0 0 1 519 352 V352 A3 3 0 0 1 522 349 Z" fill="#10c8fc"/>
<rect x="521" y="349" width="25" height="1" fill="#18e7ff" />
<rect x="546" y="348" width="85" height="8" fill="#462913" />
<rect x="547" y="349" width="83" height="6" fill="#ff7a18" />
<rect x="547" y="349" width="83" height="1" fill="#ff8f21" />
<path d="M634 348 H645 V356 H634 A4 4 0 0 1 630 352 V352 A4 4 0 0 1 634 348 Z" fill="#123a45"/>
<path d="M634 349 H644 V355 H634 A3 3 0 0 1 631 352 V352 A3 3 0 0 1 634 349 Z" fill="#10c8fc"/>
<rect x="633" y="349" width="11" height="1" fill="#18e7ff" />
<rect x="644" y="348" width="15" height="8" fill="#462913" />
<rect x="645" y="349" width="13" height="6" fill="#ff7a18" />
<rect x="645" y="349" width="13" height="1" fill="#ff8f21" />
<path d="M746 348 H771 V356 H746 A4 4 0 0 1 742 352 V352 A4 4 0 0 1 746 348 Z" fill="#123a45"/>
<path d="M746 349 H770 V355 H746 A3 3 0 0 1 743 352 V352 A3 3 0 0 1 746 349 Z" fill="#10c8fc"/>
<rect x="745" y="349" width="25" height="1" fill="#18e7ff" />
<path d="M858 348 H869 V356 H858 A4 4 0 0 1 854 352 V352 A4 4 0 0 1 858 348 Z" fill="#123a45"/>
<path d="M858 349 H868 V355 H858 A3 3 0 0 1 855 352 V352 A3 3 0 0 1 858 349 Z" fill="#10c8fc"/>
<rect x="857" y="349" width="11" height="1" fill="#18e7ff" />
<rect x="868" y="348" width="99" height="8" fill="#303b17" />
<rect x="869" y="349" width="97" height="6" fill="#9ccc28" />
<rect x="869" y="349" width="97" height="1" fill="#b6ec33" />
<path d="M970 348 H995 V356 H970 A4 4 0 0 1 966 352 V352 A4 4 0 0 1 970 348 Z" fill="#123a45"/>
<path d="M970 349 H994 V355 H970 A3 3 0 0 1 967 352 V352 A3 3 0 0 1 970 349 Z" fill="#10c8fc"/>
<rect x="969" y="349" width="25" height="1" fill="#18e7ff" />
<path d="M130 362 H155 V370 H130 A4 4 0 0 1 126 366 V366 A4 4 0 0 1 130 362 Z" fill="#123a45"/>
<path d="M130 363 H154 V369 H130 A3 3 0 0 1 127 366 V366 A3 3 0 0 1 130 363 Z" fill="#10c8fc"/>
<rect x="129" y="363" width="25" height="1" fill="#18e7ff" />
<path d="M242 362 H267 V370 H242 A4 4 0 0 1 238 366 V366 A4 4 0 0 1 242 362 Z" fill="#123a45"/>
<path d="M242 363 H266 V369 H242 A3 3 0 0 1 239 366 V366 A3 3 0 0 1 242 363 Z" fill="#10c8fc"/>
<rect x="241" y="363" width="25" height="1" fill="#18e7ff" />
<path d="M354 362 H379 V370 H354 A4 4 0 0 1 350 366 V366 A4 4 0 0 1 354 362 Z" fill="#123a45"/>
<path d="M354 363 H378 V369 H354 A3 3 0 0 1 351 366 V366 A3 3 0 0 1 354 363 Z" fill="#10c8fc"/>
<rect x="353" y="363" width="25" height="1" fill="#18e7ff" />
<path d="M466 362 H491 V370 H466 A4 4 0 0 1 462 366 V366 A4 4 0 0 1 466 362 Z" fill="#123a45"/>
<path d="M466 363 H490 V369 H466 A3 3 0 0 1 463 366 V366 A3 3 0 0 1 466 363 Z" fill="#10c8fc"/>
<rect x="465" y="363" width="25" height="1" fill="#18e7ff" />
<path d="M578 362 H603 V370 H578 A4 4 0 0 1 574 366 V366 A4 4 0 0 1 578 362 Z" fill="#123a45"/>
<path d="M578 363 H602 V369 H578 A3 3 0 0 1 575 366 V366 A3 3 0 0 1 578 363 Z" fill="#10c8fc"/>
<rect x="577" y="363" width="25" height="1" fill="#18e7ff" />
<path d="M690 362 H715 V370 H690 A4 4 0 0 1 686 366 V366 A4 4 0 0 1 690 362 Z" fill="#123a45"/>
<path d="M690 363 H714 V369 H690 A3 3 0 0 1 687 366 V366 A3 3 0 0 1 690 363 Z" fill="#10c8fc"/>
<rect x="689" y="363" width="25" height="1" fill="#18e7ff" />
<path d="M802 362 H827 V370 H802 A4 4 0 0 1 798 366 V366 A4 4 0 0 1 802 362 Z" fill="#123a45"/>
<path d="M802 363 H826 V369 H802 A3 3 0 0 1 799 366 V366 A3 3 0 0 1 802 363 Z" fill="#10c8fc"/>
<rect x="801" y="363" width="25" height="1" fill="#18e7ff" />
<path d="M914 362 H939 V370 H914 A4 4 0 0 1 910 366 V366 A4 4 0 0 1 914 362 Z" fill="#123a45"/>
<path d="M914 363 H938 V369 H914 A3 3 0 0 1 911 366 V366 A3 3 0 0 1 914 363 Z" fill="#10c8fc"/>
<rect x="913" y="363" width="25" height="1" fill="#18e7ff" />
<path d="M102 376 H127 V384 H102 A4 4 0 0 1 98 380 V380 A4 4 0 0 1 102 376 Z" fill="#123a45"/>
<path d="M102 377 H126 V383 H102 A3 3 0 0 1 99 380 V380 A3 3 0 0 1 102 377 Z" fill="#10c8fc"/>
<rect x="101" y="377" width="25" height="1" fill="#18e7ff" />
<path d="M158 376 H183 V384 H158 A4 4 0 0 1 154 380 V380 A4 4 0 0 1 158 376 Z" fill="#123a45"/>
<path d="M158 377 H182 V383 H158 A3 3 0 0 1 155 380 V380 A3 3 0 0 1 158 377 Z" fill="#10c8fc"/>
<rect x="157" y="377" width="25" height="1" fill="#18e7ff" />
<path d="M200 376 H211 V384 H200 A4 4 0 0 1 196 380 V380 A4 4 0 0 1 200 376 Z" fill="#123a45"/>
<path d="M200 377 H210 V383 H200 A3 3 0 0 1 197 380 V380 A3 3 0 0 1 200 377 Z" fill="#10c8fc"/>
<rect x="199" y="377" width="11" height="1" fill="#18e7ff" />
<path d="M214 376 H239 V384 H214 A4 4 0 0 1 210 380 V380 A4 4 0 0 1 214 376 Z" fill="#123a45"/>
<path d="M214 377 H238 V383 H214 A3 3 0 0 1 211 380 V380 A3 3 0 0 1 214 377 Z" fill="#10c8fc"/>
<rect x="213" y="377" width="25" height="1" fill="#18e7ff" />
<path d="M270 376 H295 V384 H270 A4 4 0 0 1 266 380 V380 A4 4 0 0 1 270 376 Z" fill="#123a45"/>
<path d="M270 377 H294 V383 H270 A3 3 0 0 1 267 380 V380 A3 3 0 0 1 270 377 Z" fill="#10c8fc"/>
<rect x="269" y="377" width="25" height="1" fill="#18e7ff" />
<path d="M326 376 H351 V384 H326 A4 4 0 0 1 322 380 V380 A4 4 0 0 1 326 376 Z" fill="#123a45"/>
<path d="M326 377 H350 V383 H326 A3 3 0 0 1 323 380 V380 A3 3 0 0 1 326 377 Z" fill="#10c8fc"/>
<rect x="325" y="377" width="25" height="1" fill="#18e7ff" />
<path d="M382 376 H407 V384 H382 A4 4 0 0 1 378 380 V380 A4 4 0 0 1 382 376 Z" fill="#123a45"/>
<path d="M382 377 H406 V383 H382 A3 3 0 0 1 379 380 V380 A3 3 0 0 1 382 377 Z" fill="#10c8fc"/>
<rect x="381" y="377" width="25" height="1" fill="#18e7ff" />
<path d="M424 376 H435 V384 H424 A4 4 0 0 1 420 380 V380 A4 4 0 0 1 424 376 Z" fill="#123a45"/>
<path d="M424 377 H434 V383 H424 A3 3 0 0 1 421 380 V380 A3 3 0 0 1 424 377 Z" fill="#10c8fc"/>
<rect x="423" y="377" width="11" height="1" fill="#18e7ff" />
<path d="M438 376 H463 V384 H438 A4 4 0 0 1 434 380 V380 A4 4 0 0 1 438 376 Z" fill="#123a45"/>
<path d="M438 377 H462 V383 H438 A3 3 0 0 1 435 380 V380 A3 3 0 0 1 438 377 Z" fill="#10c8fc"/>
<rect x="437" y="377" width="25" height="1" fill="#18e7ff" />
<path d="M494 376 H519 V384 H494 A4 4 0 0 1 490 380 V380 A4 4 0 0 1 494 376 Z" fill="#123a45"/>
<path d="M494 377 H518 V383 H494 A3 3 0 0 1 491 380 V380 A3 3 0 0 1 494 377 Z" fill="#10c8fc"/>
<rect x="493" y="377" width="25" height="1" fill="#18e7ff" />
<path d="M550 376 H575 V384 H550 A4 4 0 0 1 546 380 V380 A4 4 0 0 1 550 376 Z" fill="#123a45"/>
<path d="M550 377 H574 V383 H550 A3 3 0 0 1 547 380 V380 A3 3 0 0 1 550 377 Z" fill="#10c8fc"/>
<rect x="549" y="377" width="25" height="1" fill="#18e7ff" />
<path d="M606 376 H631 V384 H606 A4 4 0 0 1 602 380 V380 A4 4 0 0 1 606 376 Z" fill="#123a45"/>
<path d="M606 377 H630 V383 H606 A3 3 0 0 1 603 380 V380 A3 3 0 0 1 606 377 Z" fill="#10c8fc"/>
<rect x="605" y="377" width="25" height="1" fill="#18e7ff" />
<path d="M648 376 H659 V384 H648 A4 4 0 0 1 644 380 V380 A4 4 0 0 1 648 376 Z" fill="#123a45"/>
<path d="M648 377 H658 V383 H648 A3 3 0 0 1 645 380 V380 A3 3 0 0 1 648 377 Z" fill="#10c8fc"/>
<rect x="647" y="377" width="11" height="1" fill="#18e7ff" />
<path d="M662 376 H687 V384 H662 A4 4 0 0 1 658 380 V380 A4 4 0 0 1 662 376 Z" fill="#123a45"/>
<path d="M662 377 H686 V383 H662 A3 3 0 0 1 659 380 V380 A3 3 0 0 1 662 377 Z" fill="#10c8fc"/>
<rect x="661" y="377" width="25" height="1" fill="#18e7ff" />
<path d="M718 376 H743 V384 H718 A4 4 0 0 1 714 380 V380 A4 4 0 0 1 718 376 Z" fill="#123a45"/>
<path d="M718 377 H742 V383 H718 A3 3 0 0 1 715 380 V380 A3 3 0 0 1 718 377 Z" fill="#10c8fc"/>
<rect x="717" y="377" width="25" height="1" fill="#18e7ff" />
<path d="M774 376 H799 V384 H774 A4 4 0 0 1 770 380 V380 A4 4 0 0 1 774 376 Z" fill="#123a45"/>
<path d="M774 377 H798 V383 H774 A3 3 0 0 1 771 380 V380 A3 3 0 0 1 774 377 Z" fill="#10c8fc"/>
<rect x="773" y="377" width="25" height="1" fill="#18e7ff" />
<path d="M830 376 H855 V384 H830 A4 4 0 0 1 826 380 V380 A4 4 0 0 1 830 376 Z" fill="#123a45"/>
<path d="M830 377 H854 V383 H830 A3 3 0 0 1 827 380 V380 A3 3 0 0 1 830 377 Z" fill="#10c8fc"/>
<rect x="829" y="377" width="25" height="1" fill="#18e7ff" />
<path d="M872 376 H883 V384 H872 A4 4 0 0 1 868 380 V380 A4 4 0 0 1 872 376 Z" fill="#123a45"/>
<path d="M872 377 H882 V383 H872 A3 3 0 0 1 869 380 V380 A3 3 0 0 1 872 377 Z" fill="#10c8fc"/>
<rect x="871" y="377" width="11" height="1" fill="#18e7ff" />
<path d="M886 376 H911 V384 H886 A4 4 0 0 1 882 380 V380 A4 4 0 0 1 886 376 Z" fill="#123a45"/>
<path d="M886 377 H910 V383 H886 A3 3 0 0 1 883 380 V380 A3 3 0 0 1 886 377 Z" fill="#10c8fc"/>
<rect x="885" y="377" width="25" height="1" fill="#18e7ff" />
<path d="M942 376 H967 V384 H942 A4 4 0 0 1 938 380 V380 A4 4 0 0 1 942 376 Z" fill="#123a45"/>
<path d="M942 377 H966 V383 H942 A3 3 0 0 1 939 380 V380 A3 3 0 0 1 942 377 Z" fill="#10c8fc"/>
<rect x="941" y="377" width="25" height="1" fill="#18e7ff" />
<path d="M998 376 H1015 V384 H998 A4 4 0 0 1 994 380 V380 A4 4 0 0 1 998 376 Z" fill="#123a45"/>
<path d="M998 377 H1014 V383 H998 A3 3 0 0 1 995 380 V380 A3 3 0 0 1 998 377 Z" fill="#10c8fc"/>
<rect x="997" y="377" width="17" height="1" fill="#18e7ff" />
<path d="M102 383 H267 V391 H102 A4 4 0 0 1 98 387 V387 A4 4 0 0 1 102 383 Z" fill="#303b17"/>
<path d="M102 384 H266 V390 H102 A3 3 0 0 1 99 387 V387 A3 3 0 0 1 102 384 Z" fill="#9ccc28"/>
<rect x="101" y="384" width="165" height="1" fill="#b6ec33" />
<rect x="266" y="383" width="29" height="8" fill="#462913" />
<rect x="267" y="384" width="27" height="6" fill="#ff7a18" />
<rect x="267" y="384" width="27" height="1" fill="#ff8f21" />
<path d="M298 383 H323 V391 H298 A4 4 0 0 1 294 387 V387 A4 4 0 0 1 298 383 Z" fill="#462913"/>
<path d="M298 384 H322 V390 H298 A3 3 0 0 1 295 387 V387 A3 3 0 0 1 298 384 Z" fill="#ff7a18"/>
<rect x="297" y="384" width="25" height="1" fill="#ff8f21" />
<path d="M326 383 H407 V391 H326 A4 4 0 0 1 322 387 V387 A4 4 0 0 1 326 383 Z" fill="#303b17"/>
<path d="M326 384 H406 V390 H326 A3 3 0 0 1 323 387 V387 A3 3 0 0 1 326 384 Z" fill="#9ccc28"/>
<rect x="325" y="384" width="81" height="1" fill="#b6ec33" />
<path d="M410 383 H547 V391 H410 A4 4 0 0 1 406 387 V387 A4 4 0 0 1 410 383 Z" fill="#462913"/>
<path d="M410 384 H546 V390 H410 A3 3 0 0 1 407 387 V387 A3 3 0 0 1 410 384 Z" fill="#ff7a18"/>
<rect x="409" y="384" width="137" height="1" fill="#ff8f21" />
<path d="M550 383 H715 V391 H550 A4 4 0 0 1 546 387 V387 A4 4 0 0 1 550 383 Z" fill="#303b17"/>
<path d="M550 384 H714 V390 H550 A3 3 0 0 1 547 387 V387 A3 3 0 0 1 550 384 Z" fill="#9ccc28"/>
<rect x="549" y="384" width="165" height="1" fill="#b6ec33" />
<rect x="714" y="383" width="29" height="8" fill="#462913" />
<rect x="715" y="384" width="27" height="6" fill="#ff7a18" />
<rect x="715" y="384" width="27" height="1" fill="#ff8f21" />
<path d="M746 383 H771 V391 H746 A4 4 0 0 1 742 387 V387 A4 4 0 0 1 746 383 Z" fill="#462913"/>
<path d="M746 384 H770 V390 H746 A3 3 0 0 1 743 387 V387 A3 3 0 0 1 746 384 Z" fill="#ff7a18"/>
<rect x="745" y="384" width="25" height="1" fill="#ff8f21" />
<path d="M774 383 H813 V391 H774 A4 4 0 0 1 770 387 V387 A4 4 0 0 1 774 383 Z" fill="#462913"/>
<path d="M774 384 H812 V390 H774 A3 3 0 0 1 771 387 V387 A3 3 0 0 1 774 384 Z" fill="#ff7a18"/>
<rect x="773" y="384" width="39" height="1" fill="#ff8f21" />
<path d="M816 383 H855 V391 H816 A4 4 0 0 1 812 387 V387 A4 4 0 0 1 816 383 Z" fill="#462913"/>
<path d="M816 384 H854 V390 H816 A3 3 0 0 1 813 387 V387 A3 3 0 0 1 816 384 Z" fill="#ff7a18"/>
<rect x="815" y="384" width="39" height="1" fill="#ff8f21" />
<path d="M858 383 H995 V391 H858 A4 4 0 0 1 854 387 V387 A4 4 0 0 1 858 383 Z" fill="#462913"/>
<path d="M858 384 H994 V390 H858 A3 3 0 0 1 855 387 V387 A3 3 0 0 1 858 384 Z" fill="#ff7a18"/>
<rect x="857" y="384" width="137" height="1" fill="#ff8f21" />
<path d="M998 383 H1015 V391 H998 A4 4 0 0 1 994 387 V387 A4 4 0 0 1 998 383 Z" fill="#303b17"/>
<path d="M998 384 H1014 V390 H998 A3 3 0 0 1 995 387 V387 A3 3 0 0 1 998 384 Z" fill="#9ccc28"/>
<rect x="997" y="384" width="17" height="1" fill="#b6ec33" />
<rect x="98" y="404" width="113" height="8" fill="#123a45" />
<rect x="99" y="405" width="111" height="6" fill="#10c8fc" />
<rect x="99" y="405" width="111" height="1" fill="#18e7ff" />
<path d="M100.5 408.5 H107 M103 406.1 L100.5 408.5 L103 410.9" stroke="#0a7aa0" stroke-width="0.9" fill="none"/>
<path d="M214 404 H435 V412 H214 A4 4 0 0 1 210 408 V408 A4 4 0 0 1 214 404 Z" fill="#123a45"/>
<path d="M214 405 H434 V411 H214 A3 3 0 0 1 211 408 V408 A3 3 0 0 1 214 405 Z" fill="#10c8fc"/>
<rect x="213" y="405" width="221" height="1" fill="#18e7ff" />
<path d="M438 404 H659 V412 H438 A4 4 0 0 1 434 408 V408 A4 4 0 0 1 438 404 Z" fill="#123a45"/>
<path d="M438 405 H658 V411 H438 A3 3 0 0 1 435 408 V408 A3 3 0 0 1 438 405 Z" fill="#10c8fc"/>
<rect x="437" y="405" width="221" height="1" fill="#18e7ff" />
<path d="M662 404 H883 V412 H662 A4 4 0 0 1 658 408 V408 A4 4 0 0 1 662 404 Z" fill="#123a45"/>
<path d="M662 405 H882 V411 H662 A3 3 0 0 1 659 408 V408 A3 3 0 0 1 662 405 Z" fill="#10c8fc"/>
<rect x="661" y="405" width="221" height="1" fill="#18e7ff" />
<path d="M886 404 H1015 V412 H886 A4 4 0 0 1 882 408 V408 A4 4 0 0 1 886 404 Z" fill="#123a45"/>
<path d="M886 405 H1014 V411 H886 A3 3 0 0 1 883 408 V408 A3 3 0 0 1 886 405 Z" fill="#10c8fc"/>
<rect x="885" y="405" width="129" height="1" fill="#18e7ff" />
<rect x="98" y="411" width="15" height="8" fill="#123a45" />
<rect x="99" y="412" width="13" height="6" fill="#10c8fc" />
<rect x="99" y="412" width="13" height="1" fill="#18e7ff" />
<path d="M100.5 415.5 H107 M103 413.1 L100.5 415.5 L103 417.9" stroke="#0a7aa0" stroke-width="0.9" fill="none"/>
<path d="M116 411 H141 V419 H116 A4 4 0 0 1 112 415 V415 A4 4 0 0 1 116 411 Z" fill="#123a45"/>
<path d="M116 412 H140 V418 H116 A3 3 0 0 1 113 415 V415 A3 3 0 0 1 116 412 Z" fill="#10c8fc"/>
<rect x="115" y="412" width="25" height="1" fill="#18e7ff" />
<path d="M144 411 H295 V419 H144 A4 4 0 0 1 140 415 V415 A4 4 0 0 1 144 411 Z" fill="#123a45"/>
<path d="M144 412 H294 V418 H144 A3 3 0 0 1 141 415 V415 A3 3 0 0 1 144 412 Z" fill="#10c8fc"/>
<rect x="143" y="412" width="151" height="1" fill="#18e7ff" />
<path d="M298 411 H365 V419 H298 A4 4 0 0 1 294 415 V415 A4 4 0 0 1 298 411 Z" fill="#123a45"/>
<path d="M298 412 H364 V418 H298 A3 3 0 0 1 295 415 V415 A3 3 0 0 1 298 412 Z" fill="#10c8fc"/>
<rect x="297" y="412" width="67" height="1" fill="#18e7ff" />
<path d="M368 411 H561 V419 H368 A4 4 0 0 1 364 415 V415 A4 4 0 0 1 368 411 Z" fill="#123a45"/>
<path d="M368 412 H560 V418 H368 A3 3 0 0 1 365 415 V415 A3 3 0 0 1 368 412 Z" fill="#10c8fc"/>
<rect x="367" y="412" width="193" height="1" fill="#18e7ff" />
<path d="M564 411 H589 V419 H564 A4 4 0 0 1 560 415 V415 A4 4 0 0 1 564 411 Z" fill="#123a45"/>
<path d="M564 412 H588 V418 H564 A3 3 0 0 1 561 415 V415 A3 3 0 0 1 564 412 Z" fill="#10c8fc"/>
<rect x="563" y="412" width="25" height="1" fill="#18e7ff" />
<path d="M592 411 H743 V419 H592 A4 4 0 0 1 588 415 V415 A4 4 0 0 1 592 411 Z" fill="#123a45"/>
<path d="M592 412 H742 V418 H592 A3 3 0 0 1 589 415 V415 A3 3 0 0 1 592 412 Z" fill="#10c8fc"/>
<rect x="591" y="412" width="151" height="1" fill="#18e7ff" />
<path d="M746 411 H771 V419 H746 A4 4 0 0 1 742 415 V415 A4 4 0 0 1 746 411 Z" fill="#123a45"/>
<path d="M746 412 H770 V418 H746 A3 3 0 0 1 743 415 V415 A3 3 0 0 1 746 412 Z" fill="#10c8fc"/>
<rect x="745" y="412" width="25" height="1" fill="#18e7ff" />
<path d="M774 411 H855 V419 H774 A4 4 0 0 1 770 415 V415 A4 4 0 0 1 774 411 Z" fill="#303b17"/>
<path d="M774 412 H854 V418 H774 A3 3 0 0 1 771 415 V415 A3 3 0 0 1 774 412 Z" fill="#9ccc28"/>
<rect x="773" y="412" width="81" height="1" fill="#b6ec33" />
<rect x="854" y="411" width="71" height="8" fill="#123a45" />
<rect x="855" y="412" width="69" height="6" fill="#10c8fc" />
<rect x="855" y="412" width="69" height="1" fill="#18e7ff" />
<path d="M928 411 H1009 V419 H928 A4 4 0 0 1 924 415 V415 A4 4 0 0 1 928 411 Z" fill="#123a45"/>
<path d="M928 412 H1008 V418 H928 A3 3 0 0 1 925 415 V415 A3 3 0 0 1 928 412 Z" fill="#10c8fc"/>
<rect x="927" y="412" width="81" height="1" fill="#18e7ff" />
<path d="M1012 411 H1015 V419 H1012 A4 4 0 0 1 1008 415 V415 A4 4 0 0 1 1012 411 Z" fill="#123a45"/>
<path d="M1012 412 H1014 V418 H1012 A3 3 0 0 1 1009 415 V415 A3 3 0 0 1 1012 412 Z" fill="#10c8fc"/>
<rect x="1011" y="412" width="3" height="1" fill="#18e7ff" />
<path d="M270 418 H323 V426 H270 A4 4 0 0 1 266 422 V422 A4 4 0 0 1 270 418 Z" fill="#303b17"/>
<path d="M270 419 H322 V425 H270 A3 3 0 0 1 267 422 V422 A3 3 0 0 1 270 419 Z" fill="#9ccc28"/>
<rect x="269" y="419" width="53" height="1" fill="#b6ec33" />
<path d="M410 418 H547 V426 H410 A4 4 0 0 1 406 422 V422 A4 4 0 0 1 410 418 Z" fill="#303b17"/>
<path d="M410 419 H546 V425 H410 A3 3 0 0 1 407 422 V422 A3 3 0 0 1 410 419 Z" fill="#9ccc28"/>
<rect x="409" y="419" width="137" height="1" fill="#b6ec33" />
<path d="M718 418 H771 V426 H718 A4 4 0 0 1 714 422 V422 A4 4 0 0 1 718 418 Z" fill="#303b17"/>
<path d="M718 419 H770 V425 H718 A3 3 0 0 1 715 422 V422 A3 3 0 0 1 718 419 Z" fill="#9ccc28"/>
<rect x="717" y="419" width="53" height="1" fill="#b6ec33" />
</g>
<rect x="449" y="72" width="3" height="371" fill="#eab872" />
<rect x="98" y="73" width="24" height="3" fill="#ff5aa8" />
<rect x="98" y="73" width="3" height="24" fill="#ff5aa8" />
<rect x="990" y="73" width="24" height="3" fill="#ff5aa8" />
<rect x="1011" y="73" width="3" height="24" fill="#ff5aa8" />
<rect x="98" y="440" width="24" height="3" fill="#ff5aa8" />
<rect x="98" y="419" width="3" height="24" fill="#ff5aa8" />
<rect x="990" y="440" width="24" height="3" fill="#ff5aa8" />
<rect x="1011" y="419" width="3" height="24" fill="#ff5aa8" />
<path d="M500 173 V189.5 L504 185.5 L507.2 191.5 L509.6 190.3 L506.6 184.5 L511.5 184.5 Z" fill="#ffffff" stroke="#000" stroke-width="1" stroke-linejoin="miter"/>
</svg>
</body></html>
